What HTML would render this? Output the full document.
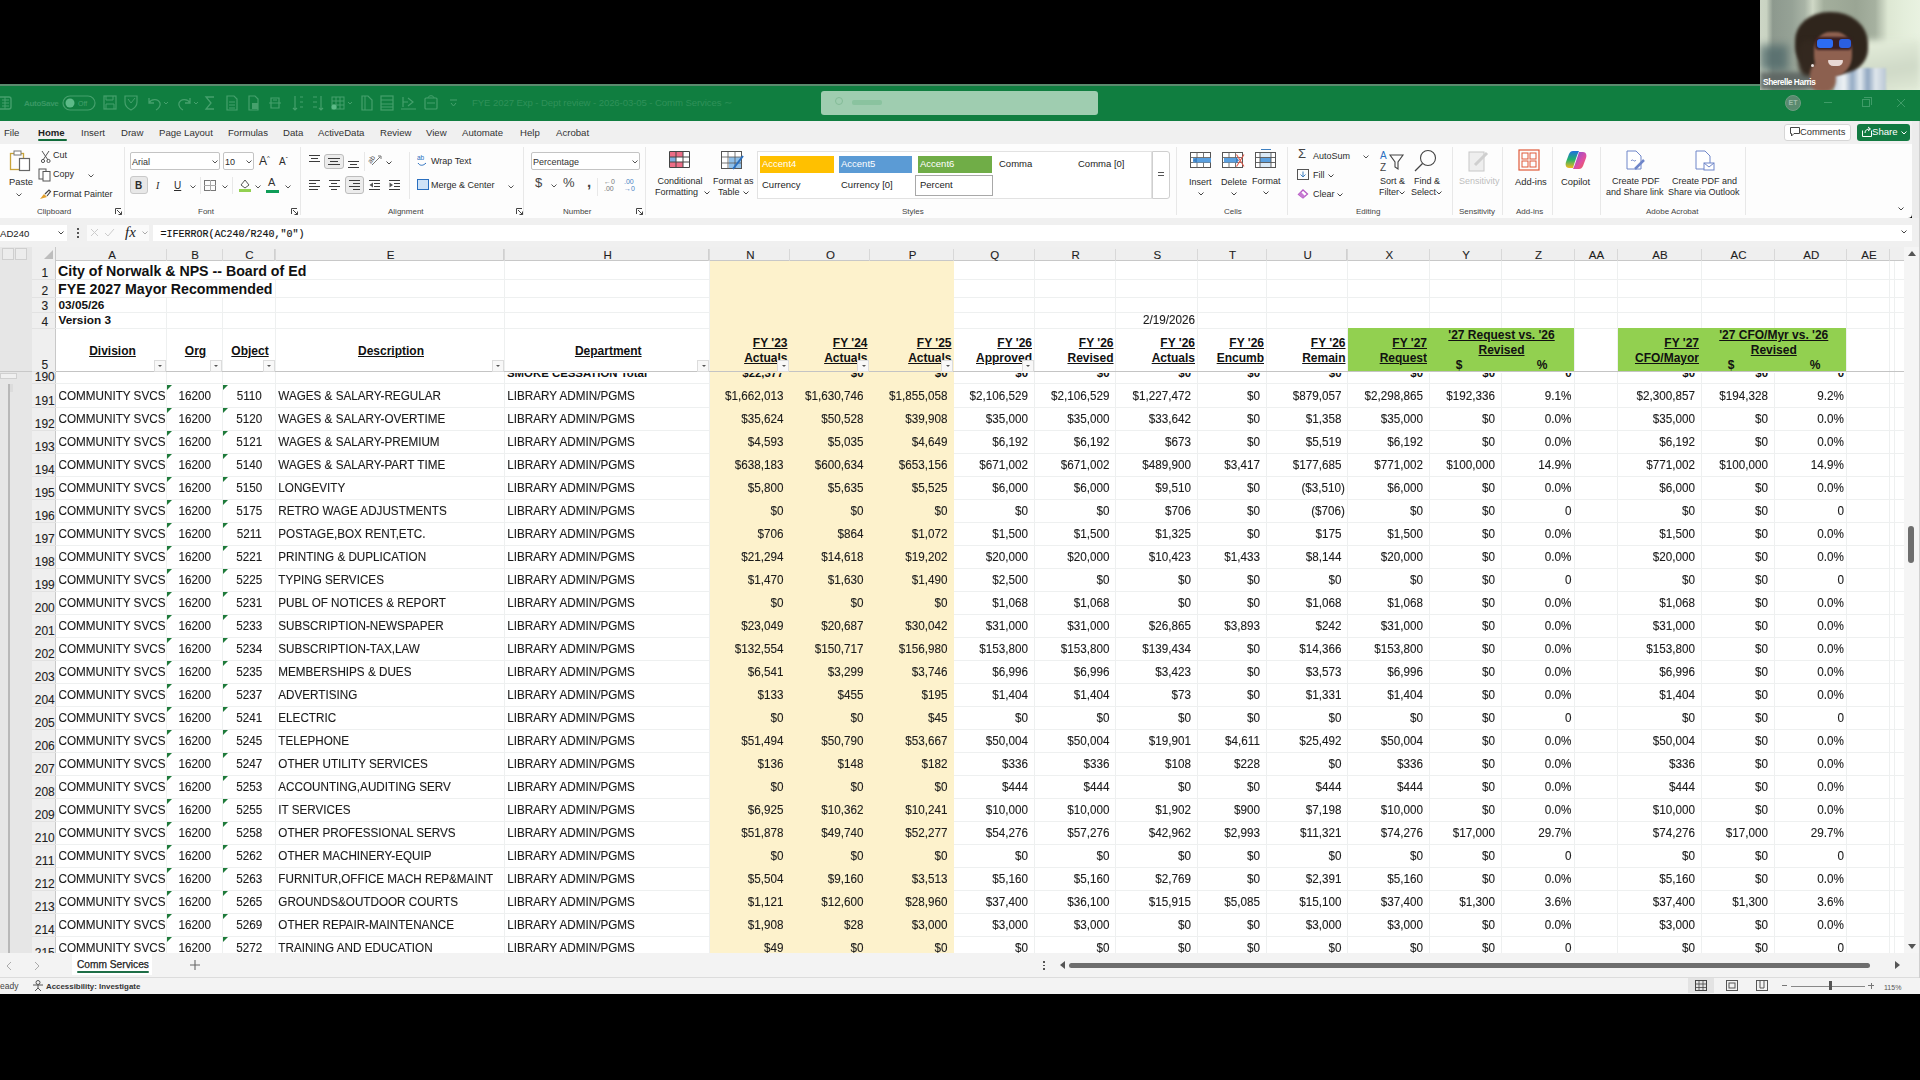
<!DOCTYPE html><html><head><meta charset="utf-8"><style>
*{margin:0;padding:0;box-sizing:border-box}
html,body{width:1920px;height:1080px;overflow:hidden;background:#000;font-family:"Liberation Sans",sans-serif;color:#222}
.cell span,.rowh span,.colh{-webkit-text-stroke:0.1px currentColor}
.abs{position:absolute}
.vl{width:1px;background:#e3e3e3}
.hl{height:1px;background:#e3e3e3}
.colh{font-size:11.5px;color:#1e1e1e;text-align:center;line-height:14px;height:14px}
.rowh{font-size:12px;color:#1e1e1e}
.cell{font-size:11.7px;color:#1a1a1a;line-height:13px;white-space:nowrap}
.cell span{transform:scaleY(1.08);transform-origin:50% 9px}
.title{font-size:14.2px;font-weight:bold;color:#111;line-height:17px;white-space:nowrap}
.sub{font-size:11.8px;font-weight:bold;color:#111;line-height:15px;white-space:nowrap}
.hdr{font-size:12px;font-weight:bold;color:#111;white-space:nowrap}
.hdr u{text-decoration-thickness:1px;text-underline-offset:1px}
.b{font-size:11.4px;font-weight:bold;color:#111;white-space:nowrap;line-height:13px}
.fbtn{width:12px;height:12px;background:#f8f8f8;border:1px solid #dcdcdc}
.fbtn:after{content:"";position:absolute;left:3.5px;top:4.5px;border-left:2px solid transparent;border-right:2px solid transparent;border-top:2px solid #555}

.rt{font-size:9px;color:#2b2b2b;white-space:nowrap;line-height:11px}
.rl{font-size:8px;color:#444;white-space:nowrap;line-height:10px}
.tab{font-size:9.6px;color:#333;white-space:nowrap;line-height:12px}
.sep{width:1px;background:#e8e8e8}
.chev{font-size:7px;color:#555}
</style></head><body><div class="abs" style="z-index:5;left:1760px;top:0;width:160px;height:90px;overflow:hidden;background:linear-gradient(90deg,#cdd6c6 0%,#c9d3c2 4%,#8d998e 8%,#96a296 20%,#a9b4a6 28%,#cfd8c6 33%,#a3ae9c 40%,#9aa594 60%,#a6b1a0 72%,#dde7d3 80%,#e4eedb 90%,#e9f2e1 100%)">
<div class="abs" style="left:0;top:45px;width:28px;height:26px;background:#50696a;filter:blur(4px);opacity:.8"></div>
<div class="abs" style="left:96px;top:40px;width:64px;height:50px;background:linear-gradient(170deg,#e6efdc,#cfd9c7 60%,#dfe8d5);filter:blur(3px)"></div>
<div class="abs" style="left:0;top:72px;width:58px;height:18px;background:#59615f;filter:blur(2px);opacity:.85"></div>
<div class="abs" style="left:74px;top:68px;width:52px;height:30px;background:linear-gradient(90deg,#c9d6e2,#eef2f4 20%,#93aac4 35%,#e4ebf0 50%,#8fa6c0 65%,#dfe6ec 80%,#b9c7d4);filter:blur(1.2px)"></div>
<div class="abs" style="left:35px;top:12px;width:73px;height:62px;border-radius:46% 50% 40% 44%;background:#2f251c;filter:blur(1.8px)"></div>
<div class="abs" style="left:38px;top:40px;width:22px;height:36px;border-radius:40%;background:#33281f;filter:blur(2px)"></div>
<div class="abs" style="left:54px;top:32px;width:38px;height:44px;border-radius:42% 42% 46% 46%;background:#8f6150;filter:blur(1.2px)"></div>
<div class="abs" style="left:50px;top:62px;width:26px;height:30px;border-radius:40%;background:#8c604f;filter:blur(1.5px)"></div>
<div class="abs" style="left:55px;top:37px;width:37px;height:13px;border-radius:4px;background:#3a1f22;filter:blur(.8px)"></div>
<div class="abs" style="left:57px;top:39px;width:16px;height:9px;background:#2c6cf4;border-radius:3px;filter:blur(.7px)"></div>
<div class="abs" style="left:79px;top:39px;width:12px;height:9px;background:#2a5fe0;border-radius:3px;filter:blur(.7px)"></div>
<div class="abs" style="left:68px;top:60px;width:15px;height:6px;background:#e8d8d4;border-radius:1px 1px 8px 8px;filter:blur(.6px)"></div>
<div class="abs" style="left:51px;top:64px;width:3px;height:3px;background:#e8e0dc;border-radius:50%"></div>
<div class="abs" style="left:3px;top:77px;font-size:8.4px;font-weight:bold;color:#fff;letter-spacing:-0.45px">Sherelle Harris</div>
</div>
<div class="abs" style="left:0;top:84px;width:1920px;height:37px;background:#107e40"></div>
<div class="abs" style="left:0;top:84px;width:1760px;height:1.5px;background:#5c8a6e"></div>
<svg class="abs" style="left:0px;top:94px" width="14" height="18"><rect x="-3" y="3" width="14" height="12" rx="2" fill="none" stroke="#45a06c" stroke-width="1.4"/><path d="M2 6H9M2 9H9M2 12H9M5 3V15" stroke="#45a06c"/></svg>
<div class="abs" style="left:24px;top:99px;font-size:8px;color:#3a9864;font-weight:bold;letter-spacing:-.3px">AutoSave</div>
<svg class="abs" style="left:62px;top:94px" width="34" height="18"><rect x="1" y="2" width="32" height="14" rx="7" fill="none" stroke="#45a06c" stroke-width="1.2"/><circle cx="8" cy="9" r="4.5" fill="#5dba88"/><text x="16" y="12" font-size="7" fill="#45a06c" font-family="Liberation Sans">Off</text></svg>
<svg class="abs" style="left:103px;top:94px" width="14" height="18"><rect x="1" y="2" width="12" height="13" fill="none" stroke="#45a06c" stroke-width="1.2"/><path d="M3 2V6H10V2M3 15V10H11V15" stroke="#45a06c" fill="none"/></svg>
<svg class="abs" style="left:124px;top:94px" width="14" height="18"><path d="M1 2H13V8C13 12 9 15 7 16C5 15 1 12 1 8Z" fill="none" stroke="#45a06c" stroke-width="1.2"/><path d="M4 5L7 9L11 4" stroke="#45a06c" fill="none"/></svg>
<svg class="abs" style="left:145px;top:94px" width="24" height="18"><path d="M4 4V9H9M4 9C6 5 13 4 15 9C16 12 13 15 11 16" stroke="#45a06c" stroke-width="1.3" fill="none"/><path d="M19 8L21 10L23 8" stroke="#45a06c" fill="none"/></svg>
<svg class="abs" style="left:176px;top:94px" width="24" height="18"><path d="M14 4V9H9M14 9C12 5 5 4 3 9C2 12 5 15 7 16" stroke="#45a06c" stroke-width="1.3" fill="none"/><path d="M18 8L20 10L22 8" stroke="#45a06c" fill="none"/></svg>
<svg class="abs" style="left:204px;top:94px" width="12" height="18"><path d="M10 3H2L7 9L2 15H10" stroke="#45a06c" stroke-width="1.3" fill="none"/></svg>
<svg class="abs" style="left:225px;top:94px" width="14" height="18"><path d="M2 2H9L12 5V16H2Z" fill="none" stroke="#45a06c" stroke-width="1.2"/><path d="M4 8H10M4 11H10M4 14H10" stroke="#45a06c"/></svg>
<svg class="abs" style="left:248px;top:94px" width="12" height="18"><path d="M1 2H7L10 5V16H1Z" fill="none" stroke="#45a06c" stroke-width="1.2"/><rect x="4" y="9" width="6" height="6" fill="#45a06c"/></svg>
<svg class="abs" style="left:268px;top:94px" width="14" height="18"><path d="M3 4H11V14H3Z" fill="none" stroke="#45a06c" stroke-width="1.2"/><path d="M1 9H13M5 6H9" stroke="#45a06c"/></svg>
<svg class="abs" style="left:291px;top:94px" width="14" height="18"><path d="M4 2V16M2 14L4 16L6 14M9 3H12M9 8H12M9 13H12" stroke="#45a06c" stroke-width="1.2" fill="none"/></svg>
<svg class="abs" style="left:311px;top:94px" width="14" height="18"><path d="M10 2V16M8 14L10 16L12 14M2 3H6M2 8H6M2 13H6" stroke="#45a06c" stroke-width="1.2" fill="none"/></svg>
<svg class="abs" style="left:331px;top:94px" width="22" height="18"><rect x="1" y="3" width="12" height="12" fill="none" stroke="#45a06c"/><path d="M1 7H13M1 11H13M5 3V15M9 3V15" stroke="#45a06c"/><circle cx="3" cy="13" r="2.5" fill="#5dba88"/><path d="M17 8L19 10L21 8" stroke="#45a06c" fill="none"/></svg>
<svg class="abs" style="left:360px;top:94px" width="14" height="18"><path d="M2 2H8L12 6V16H2Z" fill="none" stroke="#45a06c" stroke-width="1.2"/><path d="M5 2V16" stroke="#45a06c"/></svg>
<svg class="abs" style="left:380px;top:94px" width="14" height="18"><rect x="1" y="2" width="12" height="14" fill="none" stroke="#45a06c" stroke-width="1.2"/><path d="M1 6H13M1 10H13M1 13H13" stroke="#45a06c"/></svg>
<svg class="abs" style="left:400px;top:94px" width="17" height="18"><path d="M1 15H16M3 3V13M3 8H8M8 4L13 8L8 12" stroke="#45a06c" stroke-width="1.2" fill="none"/></svg>
<svg class="abs" style="left:424px;top:94px" width="14" height="18"><rect x="1" y="4" width="12" height="11" rx="1" fill="none" stroke="#45a06c" stroke-width="1.2"/><path d="M4 4C4 1 10 1 10 4M3 9H11" stroke="#45a06c" fill="none"/></svg>
<svg class="abs" style="left:449px;top:94px" width="9" height="18"><path d="M1 6H8M2 9L4.5 12L7 9" stroke="#45a06c" fill="none"/></svg>
<div class="abs" style="left:472px;top:97px;font-size:9.6px;color:#2f9159;white-space:nowrap;letter-spacing:-.1px">FYE 2027 Exp - Dept review - 2026-03-05 - Comm Services &#8764;</div>
<div class="abs" style="left:821px;top:91px;width:277px;height:24px;background:#9fcdb0;border-radius:3px"></div>
<div class="abs" style="left:835px;top:97px;width:8px;height:8px;border:1.3px solid #84bc98;border-radius:50%"></div>
<div class="abs" style="left:852px;top:100px;width:30px;height:5px;background:#8ac39f;border-radius:2px"></div>
<div class="abs" style="left:1785px;top:95px;width:16px;height:16px;border-radius:50%;background:#5a8a6f;border:1px solid #6f9c82"></div>
<div class="abs" style="left:1788.5px;top:99px;font-size:7px;color:#9dbcaa;font-weight:bold">ET</div>
<div class="abs" style="left:1824px;top:102px;width:8px;height:1px;background:#3f9c68"></div>
<div class="abs" style="left:1862px;top:99px;width:8px;height:8px;border:1px solid #3f9c68"></div><div class="abs" style="left:1864px;top:97px;width:8px;height:8px;border-top:1px solid #3f9c68;border-right:1px solid #3f9c68"></div>
<svg class="abs" style="left:1896px;top:98px" width="10" height="10"><path d="M1 1L9 9M9 1L1 9" stroke="#3f9c68" stroke-width="1"/></svg>
<div class="abs" style="left:0;top:121px;width:1920px;height:23px;background:#f0f0f0"></div>
<div class="abs tab" style="left:4px;top:127px;">File</div>
<div class="abs tab" style="left:38px;top:127px;font-weight:bold;color:#222">Home</div>
<div class="abs tab" style="left:81px;top:127px;">Insert</div>
<div class="abs tab" style="left:121px;top:127px;">Draw</div>
<div class="abs tab" style="left:159px;top:127px;">Page Layout</div>
<div class="abs tab" style="left:228px;top:127px;">Formulas</div>
<div class="abs tab" style="left:283px;top:127px;">Data</div>
<div class="abs tab" style="left:318px;top:127px;">ActiveData</div>
<div class="abs tab" style="left:380px;top:127px;">Review</div>
<div class="abs tab" style="left:426px;top:127px;">View</div>
<div class="abs tab" style="left:462px;top:127px;">Automate</div>
<div class="abs tab" style="left:520px;top:127px;">Help</div>
<div class="abs tab" style="left:556px;top:127px;">Acrobat</div>
<div class="abs" style="left:38px;top:139px;width:29px;height:2px;background:#0f6b3a;border-radius:1px"></div>
<div class="abs" style="left:1784px;top:123.5px;width:67px;height:17px;background:#fff;border:1px solid #d6d6d6;border-radius:3px"></div>
<svg class="abs" style="left:1790px;top:127px" width="10" height="10"><path d="M0.5 0.5H9.5V6.5H4L1.5 9V6.5H0.5Z" fill="none" stroke="#444" stroke-width="1"/></svg>
<div class="abs tab" style="left:1800px;top:126px;font-size:9.4px">Comments</div>
<div class="abs" style="left:1857px;top:123.5px;width:53px;height:17px;background:#127a42;border-radius:3px"></div>
<svg class="abs" style="left:1862px;top:126px" width="10" height="11"><path d="M0.5 4.5V10.5H9.5V4.5" fill="none" stroke="#fff"/><path d="M3 7C3 4 5 3 8 3M6 1L8.5 3L6 5" fill="none" stroke="#fff"/></svg>
<div class="abs tab" style="left:1872px;top:126px;color:#fff;font-size:9.6px">Share</div>
<svg class="abs" style="left:1901px;top:131px" width="6" height="4"><path d="M0.5 0.5L3 3L5.5 0.5" stroke="#fff" stroke-width="1" fill="none"/></svg>
<div class="abs" style="left:0;top:144px;width:1912px;height:74px;background:#fdfdfd;border-radius:0 0 4px 0"></div>
<div class="abs" style="left:1912px;top:121px;width:8px;height:130px;background:#ececec"></div>
<div class="abs" style="left:0;top:218px;width:1920px;height:29px;background:#f0f0f0"></div>
<div class="abs sep" style="left:124px;top:147px;height:68px"></div>
<div class="abs sep" style="left:300px;top:147px;height:68px"></div>
<div class="abs sep" style="left:523px;top:147px;height:68px"></div>
<div class="abs sep" style="left:645px;top:147px;height:68px"></div>
<div class="abs sep" style="left:1176px;top:147px;height:68px"></div>
<div class="abs sep" style="left:1287px;top:147px;height:68px"></div>
<div class="abs sep" style="left:1452px;top:147px;height:68px"></div>
<div class="abs sep" style="left:1502px;top:147px;height:68px"></div>
<div class="abs sep" style="left:1552px;top:147px;height:68px"></div>
<div class="abs sep" style="left:1600px;top:147px;height:68px"></div>
<div class="abs sep" style="left:1745px;top:147px;height:68px"></div>
<div class="abs sep" style="left:408.5px;top:152px;height:47px"></div>
<div class="abs sep" style="left:597px;top:178px;height:18px"></div>
<div class="abs sep" style="left:200px;top:177px;height:17px"></div>
<div class="abs sep" style="left:232px;top:177px;height:17px"></div>
<svg class="abs" style="left:8px;top:148px" width="26" height="26"><rect x="2.5" y="5.5" width="13" height="16" fill="none" stroke="#c9a43a" stroke-width="1.3"/><rect x="6" y="3" width="7" height="4" fill="#fff" stroke="#777" stroke-width="1"/><rect x="11.5" y="10.5" width="10" height="12" fill="#fff" stroke="#666" stroke-width="1.2"/></svg>
<div class="abs rt" style="left:9px;top:176px;font-size:9.4px">Paste</div>
<svg class="abs" style="left:16px;top:193px" width="6" height="4"><path d="M0.5 0.5L3 3L5.5 0.5" stroke="#555" stroke-width="1" fill="none"/></svg>
<svg class="abs" style="left:40px;top:150px" width="12" height="13"><path d="M2 1L8 10M9 1L3 10" stroke="#555" stroke-width="1"/><circle cx="3" cy="11" r="1.6" fill="none" stroke="#555"/><circle cx="8.5" cy="11" r="1.6" fill="none" stroke="#555"/></svg>
<div class="abs rt" style="left:53px;top:150px;">Cut</div>
<svg class="abs" style="left:38px;top:168px" width="14" height="14"><rect x="1" y="1" width="7" height="10" fill="none" stroke="#555"/><rect x="5" y="3.5" width="7" height="9.5" fill="#fff" stroke="#555"/></svg>
<div class="abs rt" style="left:53px;top:169px;">Copy</div>
<svg class="abs" style="left:88px;top:174px" width="6" height="4"><path d="M0.5 0.5L3 3L5.5 0.5" stroke="#555" stroke-width="1" fill="none"/></svg>
<svg class="abs" style="left:38px;top:188px" width="14" height="13"><path d="M2 11L6 6L9 9Z" fill="#e2a02c"/><path d="M7 6L11 2L12.5 3.5L9 8" fill="none" stroke="#444" stroke-width="1.2"/></svg>
<div class="abs rt" style="left:53px;top:189px;">Format Painter</div>
<div class="abs rl" style="left:37px;top:206.5px;">Clipboard</div>
<svg class="abs" style="left:115px;top:208px" width="7" height="7"><path d="M0.5 6V0.5H6" stroke="#444" fill="none"/><path d="M2 2L6.5 6.5M6.5 3.5V6.5H3.5" stroke="#444" fill="none"/></svg>
<div class="abs" style="left:130px;top:152px;width:90px;height:18px;background:#fff;border:1px solid #c4c4c4;border-radius:2px"></div>
<div class="abs rt" style="left:132px;top:157px;color:#333">Arial</div>
<svg class="abs" style="left:212px;top:160px" width="6" height="4"><path d="M0.5 0.5L3 3L5.5 0.5" stroke="#555" stroke-width="1" fill="none"/></svg>
<div class="abs" style="left:223px;top:152px;width:31px;height:18px;background:#fff;border:1px solid #c4c4c4;border-radius:2px"></div>
<div class="abs rt" style="left:225px;top:157px;">10</div>
<svg class="abs" style="left:246px;top:160px" width="6" height="4"><path d="M0.5 0.5L3 3L5.5 0.5" stroke="#555" stroke-width="1" fill="none"/></svg>
<div class="abs rt" style="left:259px;top:153px;font-size:12px">A<sup style="font-size:6px">^</sup></div>
<div class="abs rt" style="left:279px;top:154px;font-size:10px">A<sup style="font-size:6px">ˇ</sup></div>
<div class="abs" style="left:130px;top:176px;width:18px;height:18px;background:#e8e8e8;border:1px solid #c9c9c9;border-radius:3px"></div>
<div class="abs rt" style="left:135px;top:180px;font-weight:bold;font-size:10px">B</div>
<div class="abs rt" style="left:156px;top:180px;font-style:italic;font-size:10px;font-family:Liberation Serif">I</div>
<div class="abs rt" style="left:174px;top:180px;text-decoration:underline;font-size:10px">U</div>
<svg class="abs" style="left:190px;top:185px" width="6" height="4"><path d="M0.5 0.5L3 3L5.5 0.5" stroke="#555" stroke-width="1" fill="none"/></svg>
<div class="abs" style="left:204px;top:180px;width:12px;height:11px;border:1px solid #777"></div><div class="abs" style="left:210px;top:180px;width:1px;height:11px;background:#aaa"></div><div class="abs" style="left:204px;top:185px;width:12px;height:1px;background:#aaa"></div>
<svg class="abs" style="left:222px;top:185px" width="6" height="4"><path d="M0.5 0.5L3 3L5.5 0.5" stroke="#555" stroke-width="1" fill="none"/></svg>
<svg class="abs" style="left:238px;top:177px" width="14" height="16"><path d="M3 8L7 3L11 8L7 11Z" fill="none" stroke="#555"/><rect x="1" y="12" width="12" height="3" fill="#92d050"/></svg>
<svg class="abs" style="left:255px;top:185px" width="6" height="4"><path d="M0.5 0.5L3 3L5.5 0.5" stroke="#555" stroke-width="1" fill="none"/></svg>
<div class="abs" style="left:268px;top:176px;font-size:11px;color:#333">A</div><div class="abs" style="left:266px;top:190px;width:13px;height:3px;background:#0f9d58"></div>
<svg class="abs" style="left:285px;top:185px" width="6" height="4"><path d="M0.5 0.5L3 3L5.5 0.5" stroke="#555" stroke-width="1" fill="none"/></svg>
<div class="abs rl" style="left:198px;top:206.5px;">Font</div>
<svg class="abs" style="left:291px;top:208px" width="7" height="7"><path d="M0.5 6V0.5H6" stroke="#444" fill="none"/><path d="M2 2L6.5 6.5M6.5 3.5V6.5H3.5" stroke="#444" fill="none"/></svg>
<div class="abs" style="left:309px;top:155px;width:11px;height:1px;background:#3c3c3c"></div><div class="abs" style="left:311px;top:158px;width:7px;height:1px;background:#3c3c3c"></div><div class="abs" style="left:309px;top:161px;width:11px;height:1px;background:#3c3c3c"></div>
<div class="abs" style="left:324px;top:154px;width:20px;height:15px;background:#ececec;border:1px solid #bdbdbd;border-radius:3px"></div><div class="abs" style="left:328px;top:158px;width:12px;height:1px;background:#3c3c3c"></div><div class="abs" style="left:330px;top:161px;width:8px;height:1px;background:#3c3c3c"></div><div class="abs" style="left:328px;top:164px;width:12px;height:1px;background:#3c3c3c"></div>
<div class="abs" style="left:348px;top:161px;width:11px;height:1px;background:#3c3c3c"></div><div class="abs" style="left:350px;top:164px;width:7px;height:1px;background:#3c3c3c"></div><div class="abs" style="left:348px;top:167px;width:11px;height:1px;background:#3c3c3c"></div>
<div class="abs sep" style="left:364px;top:152px;height:19px"></div>
<svg class="abs" style="left:368px;top:152px" width="14" height="14"><text x="0" y="0" font-size="7" fill="#555" font-family="Liberation Sans" transform="translate(3,12) rotate(-55)">ab</text><path d="M4 13L12 5" stroke="#666" stroke-width="0.9"/><path d="M10 4L13 4L13 7" stroke="#666" fill="none" stroke-width="0.9"/></svg>
<svg class="abs" style="left:386px;top:161px" width="6" height="4"><path d="M0.5 0.5L3 3L5.5 0.5" stroke="#444" stroke-width="1" fill="none"/></svg>
<div class="abs" style="left:309px;top:180px;width:11px;height:1px;background:#3c3c3c"></div><div class="abs" style="left:309px;top:183px;width:7px;height:1px;background:#3c3c3c"></div><div class="abs" style="left:309px;top:186px;width:11px;height:1px;background:#3c3c3c"></div><div class="abs" style="left:309px;top:189px;width:9px;height:1px;background:#3c3c3c"></div>
<div class="abs" style="left:329px;top:180px;width:11px;height:1px;background:#3c3c3c"></div><div class="abs" style="left:331px;top:183px;width:6px;height:1px;background:#3c3c3c"></div><div class="abs" style="left:329px;top:186px;width:11px;height:1px;background:#3c3c3c"></div><div class="abs" style="left:331px;top:189px;width:6px;height:1px;background:#3c3c3c"></div>
<div class="abs" style="left:345px;top:176px;width:19px;height:18px;background:#ececec;border:1px solid #bdbdbd;border-radius:3px"></div><div class="abs" style="left:349px;top:180px;width:11px;height:1px;background:#3c3c3c"></div><div class="abs" style="left:353px;top:183px;width:7px;height:1px;background:#3c3c3c"></div><div class="abs" style="left:349px;top:186px;width:11px;height:1px;background:#3c3c3c"></div><div class="abs" style="left:353px;top:189px;width:7px;height:1px;background:#3c3c3c"></div>
<div class="abs" style="left:369px;top:180px;width:11px;height:1px;background:#3c3c3c"></div><div class="abs" style="left:374px;top:183px;width:6px;height:1px;background:#3c3c3c"></div><div class="abs" style="left:374px;top:186px;width:6px;height:1px;background:#3c3c3c"></div><div class="abs" style="left:369px;top:189px;width:11px;height:1px;background:#3c3c3c"></div>
<svg class="abs" style="left:369px;top:182px" width="5" height="6"><path d="M4 0.5L0.5 3L4 5.5" fill="#555"/></svg>
<div class="abs" style="left:389px;top:180px;width:11px;height:1px;background:#3c3c3c"></div><div class="abs" style="left:394px;top:183px;width:6px;height:1px;background:#3c3c3c"></div><div class="abs" style="left:394px;top:186px;width:6px;height:1px;background:#3c3c3c"></div><div class="abs" style="left:389px;top:189px;width:11px;height:1px;background:#3c3c3c"></div>
<svg class="abs" style="left:389px;top:182px" width="5" height="6"><path d="M0.5 0.5L4 3L0.5 5.5" fill="#555"/></svg>
<svg class="abs" style="left:417px;top:154px" width="12" height="13"><text x="0" y="6" font-size="6.5" fill="#2a6fbf">ab</text><path d="M1 9C3 12 6 12 9 9" stroke="#2a6fbf" fill="none"/></svg>
<div class="abs rt" style="left:431px;top:156px;">Wrap Text</div>
<div class="abs" style="left:417px;top:179px;width:12px;height:11px;border:1.2px solid #2a6fbf;background:#cfe3f7"></div>
<div class="abs rt" style="left:431px;top:180px;">Merge &amp; Center</div>
<svg class="abs" style="left:508px;top:185px" width="6" height="4"><path d="M0.5 0.5L3 3L5.5 0.5" stroke="#555" stroke-width="1" fill="none"/></svg>
<div class="abs rl" style="left:388px;top:206.5px;">Alignment</div>
<svg class="abs" style="left:516px;top:208px" width="7" height="7"><path d="M0.5 6V0.5H6" stroke="#444" fill="none"/><path d="M2 2L6.5 6.5M6.5 3.5V6.5H3.5" stroke="#444" fill="none"/></svg>
<div class="abs" style="left:531px;top:152px;width:109px;height:18px;background:#fff;border:1px solid #c4c4c4;border-radius:2px"></div>
<div class="abs rt" style="left:533px;top:157px;color:#333">Percentage</div>
<svg class="abs" style="left:632px;top:160px" width="6" height="4"><path d="M0.5 0.5L3 3L5.5 0.5" stroke="#555" stroke-width="1" fill="none"/></svg>
<div class="abs rt" style="left:535px;top:177px;font-size:13px;color:#444">$</div>
<svg class="abs" style="left:551px;top:184px" width="6" height="4"><path d="M0.5 0.5L3 3L5.5 0.5" stroke="#555" stroke-width="1" fill="none"/></svg>
<div class="abs rt" style="left:563px;top:177px;font-size:13px;color:#444">%</div>
<div class="abs rt" style="left:587px;top:176px;font-size:15px;font-weight:bold;color:#444">,</div>
<div class="abs rt" style="left:604px;top:178px;color:#777;line-height:7px"><span style="font-size:7px;line-height:7px">←0<br>.00</span></div>
<div class="abs rt" style="left:624px;top:178px;color:#4a82c4;line-height:7px"><span style="font-size:7px;line-height:7px">.00<br>→0</span></div>
<div class="abs rl" style="left:563px;top:206.5px;">Number</div>
<svg class="abs" style="left:636px;top:208px" width="7" height="7"><path d="M0.5 6V0.5H6" stroke="#444" fill="none"/><path d="M2 2L6.5 6.5M6.5 3.5V6.5H3.5" stroke="#444" fill="none"/></svg>
<svg class="abs" style="left:669px;top:151px" width="22" height="18"><rect x="0.5" y="0.5" width="20" height="16" fill="#fff"/><rect x="1" y="1" width="13" height="5" fill="#ec6d86"/><rect x="1" y="6" width="6" height="5" fill="#7fb0e0"/><rect x="1" y="11" width="13" height="5.5" fill="#ec6d86"/><path d="M0.5 0.5H20.5V16.5H0.5Z M0.5 6H20.5M0.5 11H20.5M7 0.5V16.5M14 0.5V16.5" stroke="#444" stroke-width="1" fill="none"/></svg>
<div class="abs rt" style="left:657.5px;top:176px;">Conditional</div>
<div class="abs rt" style="left:655px;top:187px;">Formatting</div>
<svg class="abs" style="left:704px;top:191px" width="6" height="4"><path d="M0.5 0.5L3 3L5.5 0.5" stroke="#444" stroke-width="1" fill="none"/></svg>
<svg class="abs" style="left:721px;top:151px" width="24" height="20"><rect x="0.5" y="0.5" width="20" height="17" fill="#fff" stroke="#555"/><rect x="8" y="6" width="12" height="11" fill="#8fc0ea"/><path d="M0 6H21M0 12H21M7 0V18M14 0V18" stroke="#555" stroke-width="0.8"/><path d="M12 18L22 5" stroke="#2a6fbf" stroke-width="2"/></svg>
<div class="abs rt" style="left:713px;top:176px;">Format as</div>
<div class="abs rt" style="left:718px;top:187px;">Table</div>
<svg class="abs" style="left:743px;top:191px" width="6" height="4"><path d="M0.5 0.5L3 3L5.5 0.5" stroke="#444" stroke-width="1" fill="none"/></svg>
<div class="abs" style="left:757px;top:151px;width:395px;height:48px;background:#fff;border:1px solid #e2e2e2"></div>
<div class="abs" style="left:760px;top:156px;width:74px;height:17px;background:#ffc000"></div>
<div class="abs rt" style="left:762px;top:158px;color:#fff;font-size:9.5px">Accent4</div>
<div class="abs" style="left:839px;top:156px;width:73px;height:17px;background:#5b9bd5"></div>
<div class="abs rt" style="left:841px;top:158px;color:#fff;font-size:9.5px">Accent5</div>
<div class="abs" style="left:918px;top:156px;width:74px;height:17px;background:#70ad47"></div>
<div class="abs rt" style="left:920px;top:158px;color:#fff;font-size:9.5px">Accent6</div>
<div class="abs rt" style="left:999px;top:158px;font-size:9.5px;color:#222">Comma</div>
<div class="abs rt" style="left:1078px;top:158px;font-size:9.5px;color:#222">Comma [0]</div>
<div class="abs rt" style="left:762px;top:179px;font-size:9.5px;color:#222">Currency</div>
<div class="abs rt" style="left:841px;top:179px;font-size:9.5px;color:#222">Currency [0]</div>
<div class="abs" style="left:915px;top:175px;width:78px;height:21px;border:1px solid #a8a8a8;background:#fff"></div>
<div class="abs rt" style="left:920px;top:179px;font-size:9.5px;color:#222">Percent</div>
<div class="abs" style="left:1152px;top:151px;width:18px;height:48px;background:#fff;border:1px solid #cfcfcf;border-radius:0 3px 3px 0"></div>
<div class="abs" style="left:1158px;top:172px;width:6px;height:1px;background:#555"></div><div class="abs" style="left:1158px;top:175px;width:6px;height:1px;background:#555"></div>
<div class="abs rl" style="left:902px;top:206.5px;">Styles</div>
<svg class="abs" style="left:1189px;top:150px" width="24" height="20"><rect x="1.5" y="2.5" width="20" height="15" fill="#fff" stroke="#555"/><path d="M1.5 7.5H21.5M1.5 12.5H21.5M8 2.5V17.5M14.5 2.5V17.5" stroke="#666" stroke-width="0.9"/><rect x="4" y="8" width="18" height="4.5" fill="#5aa0e0"/><path d="M4 10.2L8 7.5V13Z" fill="#3d7fc0"/></svg>
<div class="abs rt" style="left:1189px;top:176.5px;">Insert</div>
<svg class="abs" style="left:1198px;top:192px" width="6" height="4"><path d="M0.5 0.5L3 3L5.5 0.5" stroke="#444" stroke-width="1" fill="none"/></svg>
<svg class="abs" style="left:1221px;top:150px" width="26" height="20"><rect x="1.5" y="2.5" width="20" height="15" fill="#fff" stroke="#555"/><path d="M1.5 7.5H21.5M1.5 12.5H21.5M8 2.5V17.5M14.5 2.5V17.5" stroke="#666" stroke-width="0.9"/><rect x="3" y="8" width="12" height="4.5" fill="#5aa0e0"/><path d="M15 7L18 10.2L15 13.5Z" fill="#3d7fc0"/><path d="M15.5 4.5L23 16.5M23 4.5L15.5 16.5" stroke="#e0594a" stroke-width="1.1"/></svg>
<div class="abs rt" style="left:1221px;top:176.5px;">Delete</div>
<svg class="abs" style="left:1231px;top:192px" width="6" height="4"><path d="M0.5 0.5L3 3L5.5 0.5" stroke="#444" stroke-width="1" fill="none"/></svg>
<svg class="abs" style="left:1254px;top:148px" width="24" height="22"><path d="M7 1.5H17" stroke="#3d7fc0" stroke-width="1"/><rect x="1.5" y="4.5" width="20" height="15" fill="#fff" stroke="#555"/><rect x="6" y="5" width="11" height="14" fill="#dbeaf7"/><rect x="6" y="10" width="11" height="4.5" fill="#5aa0e0"/><path d="M1.5 9.5H21.5M1.5 14.5H21.5M6 4.5V19.5M17 4.5V19.5" stroke="#555" stroke-width="0.9"/></svg>
<div class="abs rt" style="left:1252px;top:176px;">Format</div>
<svg class="abs" style="left:1263px;top:191px" width="6" height="4"><path d="M0.5 0.5L3 3L5.5 0.5" stroke="#444" stroke-width="1" fill="none"/></svg>
<div class="abs rl" style="left:1224px;top:206.5px;">Cells</div>
<div class="abs rt" style="left:1298px;top:148px;font-size:13px;color:#444">Σ</div>
<div class="abs rt" style="left:1313px;top:151px;">AutoSum</div>
<svg class="abs" style="left:1363px;top:155px" width="6" height="4"><path d="M0.5 0.5L3 3L5.5 0.5" stroke="#555" stroke-width="1" fill="none"/></svg>
<svg class="abs" style="left:1297px;top:168px" width="13" height="13"><rect x="0.5" y="1.5" width="11" height="10" fill="none" stroke="#555"/><path d="M6 3.5V9M3.5 6.5L6 9L8.5 6.5" stroke="#3d7fc0" fill="none"/></svg>
<div class="abs rt" style="left:1313px;top:170px;">Fill</div>
<svg class="abs" style="left:1328px;top:174px" width="6" height="4"><path d="M0.5 0.5L3 3L5.5 0.5" stroke="#444" stroke-width="1" fill="none"/></svg>
<svg class="abs" style="left:1297px;top:188px" width="12" height="11"><path d="M1.5 6.5L6 2L10.5 6L6 10Z" fill="#fff" stroke="#b65bc4" stroke-width="1.3"/><path d="M1.5 6.5L4 4L8 8L6 10Z" fill="#c77bd3"/></svg>
<div class="abs rt" style="left:1313px;top:189px;">Clear</div>
<svg class="abs" style="left:1337px;top:193px" width="6" height="4"><path d="M0.5 0.5L3 3L5.5 0.5" stroke="#444" stroke-width="1" fill="none"/></svg>
<svg class="abs" style="left:1379px;top:149px" width="26" height="24"><text x="1" y="10" font-size="10" fill="#2a6fbf" font-family="Liberation Sans">A</text><text x="1" y="22" font-size="10" fill="#444" font-family="Liberation Sans">Z</text><path d="M11 6H24L19 13V20L16 18V13Z" fill="none" stroke="#444" stroke-width="1.1"/></svg>
<div class="abs rt" style="left:1380px;top:176px;">Sort &amp;</div>
<div class="abs rt" style="left:1379px;top:187px;">Filter</div>
<svg class="abs" style="left:1399px;top:191px" width="6" height="4"><path d="M0.5 0.5L3 3L5.5 0.5" stroke="#444" stroke-width="1" fill="none"/></svg>
<svg class="abs" style="left:1413px;top:149px" width="24" height="24"><circle cx="15" cy="9" r="7.5" fill="none" stroke="#444" stroke-width="1.1"/><path d="M9.5 14.5L2 22" stroke="#444" stroke-width="1.2"/></svg>
<div class="abs rt" style="left:1414px;top:176px;">Find &amp;</div>
<div class="abs rt" style="left:1411px;top:187px;">Select</div>
<svg class="abs" style="left:1436px;top:191px" width="6" height="4"><path d="M0.5 0.5L3 3L5.5 0.5" stroke="#444" stroke-width="1" fill="none"/></svg>
<div class="abs rl" style="left:1356px;top:206.5px;">Editing</div>
<svg class="abs" style="left:1467px;top:149px" width="24" height="24"><rect x="2" y="3" width="15" height="19" fill="#eee" stroke="#c8c8c8"/><path d="M8 16L20 4" stroke="#cfcfcf" stroke-width="3"/></svg>
<div class="abs rt" style="left:1459px;top:176px;color:#bdbdbd">Sensitivity</div>
<div class="abs rl" style="left:1459px;top:206.5px;">Sensitivity</div>
<svg class="abs" style="left:1518px;top:149px" width="24" height="24"><rect x="1" y="1" width="20" height="20" fill="none" stroke="#e05a3a" stroke-width="1.2"/><rect x="4" y="4" width="6" height="6" fill="none" stroke="#e05a3a"/><rect x="12" y="4" width="6" height="6" fill="none" stroke="#e05a3a"/><rect x="4" y="12" width="6" height="6" fill="none" stroke="#e05a3a"/><rect x="12" y="12" width="6" height="6" fill="none" stroke="#e05a3a"/></svg>
<div class="abs rt" style="left:1515px;top:176px;font-size:9.4px">Add-ins</div>
<div class="abs rl" style="left:1516px;top:206.5px;">Add-ins</div>
<svg class="abs" style="left:1564px;top:149px" width="24" height="22"><defs><linearGradient id="cpa" x1="0" y1="0" x2="0" y2="1"><stop offset="0" stop-color="#1f6fe0"/><stop offset=".5" stop-color="#23b26b"/><stop offset="1" stop-color="#f3b81c"/></linearGradient><linearGradient id="cpb" x1="0" y1="0" x2="1" y2="1"><stop offset="0" stop-color="#7b4ee0"/><stop offset=".6" stop-color="#e04fa0"/><stop offset="1" stop-color="#f2613a"/></linearGradient></defs><path d="M9 2H15C13 6 11 12 9 19H5C2 19 1 16 2 13L5 5C6 3 7 2 9 2Z" fill="url(#cpa)"/><path d="M15 3H19C22 3 23 6 22 9L19 17C18 19 17 20 15 20H9C11 16 13 9 15 3Z" fill="url(#cpb)"/></svg>
<div class="abs rt" style="left:1561px;top:176px;font-size:9.4px">Copilot</div>
<svg class="abs" style="left:1625px;top:150px" width="22" height="22"><path d="M2 1H11L16 6V19H2Z" fill="#fff" stroke="#6f86c9"/><path d="M6 11C8 8 9 13 11 10" stroke="#6f86c9" fill="none"/><path d="M10 19L19 10" stroke="#6f86c9" stroke-width="2.5"/></svg>
<div class="abs rt" style="left:1612px;top:176px;">Create PDF</div>
<div class="abs rt" style="left:1606px;top:187px;">and Share link</div>
<svg class="abs" style="left:1694px;top:150px" width="22" height="22"><path d="M2 1H11L16 6V19H2Z" fill="#fff" stroke="#6f86c9"/><rect x="10" y="13" width="10" height="7" fill="#fff" stroke="#6f86c9"/><path d="M10 13L15 17L20 13" stroke="#6f86c9" fill="none"/></svg>
<div class="abs rt" style="left:1672px;top:176px;">Create PDF and</div>
<div class="abs rt" style="left:1668px;top:187px;">Share via Outlook</div>
<div class="abs rl" style="left:1646px;top:206.5px;">Adobe Acrobat</div>
<svg class="abs" style="left:1898px;top:207px" width="6" height="4"><path d="M0.5 0.5L3 3L5.5 0.5" stroke="#444" stroke-width="1" fill="none"/></svg>
<div class="abs" style="left:0;top:224.5px;width:67px;height:16.5px;background:#fff"></div>
<div class="abs rt" style="left:0px;top:228px;font-size:9.6px;color:#222">AD240</div>
<svg class="abs" style="left:58px;top:231px" width="6" height="4"><path d="M0.5 0.5L3 3L5.5 0.5" stroke="#444" stroke-width="1" fill="none"/></svg>
<div class="abs" style="left:77px;top:228px;width:1.5px;height:1.5px;background:#555"></div><div class="abs" style="left:77px;top:232px;width:1.5px;height:1.5px;background:#555"></div><div class="abs" style="left:77px;top:236px;width:1.5px;height:1.5px;background:#555"></div>
<div class="abs" style="left:87px;top:224.5px;width:62px;height:16.5px;background:#fafafa"></div>
<svg class="abs" style="left:89px;top:227px" width="60" height="12"><path d="M2 2L9 9M9 2L2 9" stroke="#ccc"/><path d="M16 6L19 9L25 2" stroke="#ccc" fill="none"/></svg>
<div class="abs rt" style="left:125px;top:225px;font-family:Liberation Serif;font-size:15px;line-height:15px;color:#222"><i>fx</i></div>
<svg class="abs" style="left:142px;top:231px" width="6" height="4"><path d="M0.5 0.5L3 3L5.5 0.5" stroke="#aaa" stroke-width="1" fill="none"/></svg>
<div class="abs" style="left:153px;top:224.5px;width:1759px;height:16.5px;background:#fff"></div>
<div class="abs rt" style="left:160.5px;top:229px;font-family:Liberation Mono;font-size:10px;color:#111;-webkit-text-stroke:0.15px #111">=IFERROR(AC240/R240,"0")</div>
<svg class="abs" style="left:1901px;top:230px" width="6" height="4"><path d="M0.5 0.5L3 3L5.5 0.5" stroke="#444" stroke-width="1" fill="none"/></svg>
<div class="abs" style="left:0;top:241px;width:1920px;height:712px;background:#f0f0f0"></div>
<div class="abs" style="left:56px;top:261px;width:1848px;height:692px;background:#fff"></div>
<div class="abs" style="left:709.5px;top:261px;width:244.0px;height:691.5px;background:#fdf2cc"></div>
<div class="abs" style="left:1347.5px;top:328.3px;width:226.5px;height:43.4px;background:#92d050"></div>
<div class="abs" style="left:1617px;top:328.3px;width:229.5px;height:43.4px;background:#92d050"></div>
<div class="abs" style="left:165.5px;top:297.2px;width:1px;height:661.8px;background:#eef0f0"></div>
<div class="abs" style="left:221.5px;top:297.2px;width:1px;height:661.8px;background:#eef0f0"></div>
<div class="abs" style="left:274.5px;top:279.4px;width:1px;height:679.6px;background:#eef0f0"></div>
<div class="abs" style="left:503.5px;top:261px;width:1px;height:698px;background:#eef0f0"></div>
<div class="abs" style="left:709.0px;top:261px;width:1px;height:698px;background:#eef0f0"></div>
<div class="abs" style="left:1033.5px;top:261px;width:1px;height:698px;background:#eef0f0"></div>
<div class="abs" style="left:1115.0px;top:261px;width:1px;height:698px;background:#eef0f0"></div>
<div class="abs" style="left:1196.5px;top:261px;width:1px;height:698px;background:#eef0f0"></div>
<div class="abs" style="left:1265.5px;top:261px;width:1px;height:698px;background:#eef0f0"></div>
<div class="abs" style="left:1347.0px;top:261px;width:1px;height:698px;background:#eef0f0"></div>
<div class="abs" style="left:1428.5px;top:261px;width:1px;height:67.30000000000001px;background:#eef0f0"></div>
<div class="abs" style="left:1428.5px;top:372.5px;width:1px;height:586.5px;background:#eef0f0"></div>
<div class="abs" style="left:1500.5px;top:261px;width:1px;height:67.30000000000001px;background:#eef0f0"></div>
<div class="abs" style="left:1500.5px;top:372.5px;width:1px;height:586.5px;background:#eef0f0"></div>
<div class="abs" style="left:1573.5px;top:261px;width:1px;height:698px;background:#eef0f0"></div>
<div class="abs" style="left:1616.5px;top:261px;width:1px;height:698px;background:#eef0f0"></div>
<div class="abs" style="left:1700.5px;top:261px;width:1px;height:67.30000000000001px;background:#eef0f0"></div>
<div class="abs" style="left:1700.5px;top:372.5px;width:1px;height:586.5px;background:#eef0f0"></div>
<div class="abs" style="left:1773.5px;top:261px;width:1px;height:67.30000000000001px;background:#eef0f0"></div>
<div class="abs" style="left:1773.5px;top:372.5px;width:1px;height:586.5px;background:#eef0f0"></div>
<div class="abs" style="left:1846.0px;top:261px;width:1px;height:698px;background:#eef0f0"></div>
<div class="abs" style="left:1889.0px;top:261px;width:1px;height:698px;background:#eef0f0"></div>
<div class="abs" style="left:1894px;top:261px;width:1px;height:692px;background:#eef0f0"></div>
<div class="abs" style="left:56px;top:278.9px;width:653.5px;height:1px;background:#eef0f0"></div>
<div class="abs" style="left:953.5px;top:278.9px;width:950.5px;height:1px;background:#eef0f0"></div>
<div class="abs" style="left:56px;top:296.7px;width:653.5px;height:1px;background:#eef0f0"></div>
<div class="abs" style="left:953.5px;top:296.7px;width:950.5px;height:1px;background:#eef0f0"></div>
<div class="abs" style="left:56px;top:312.0px;width:653.5px;height:1px;background:#eef0f0"></div>
<div class="abs" style="left:953.5px;top:312.0px;width:950.5px;height:1px;background:#eef0f0"></div>
<div class="abs" style="left:56px;top:327.8px;width:653.5px;height:1px;background:#eef0f0"></div>
<div class="abs" style="left:953.5px;top:327.8px;width:394.0px;height:1px;background:#eef0f0"></div>
<div class="abs" style="left:1574px;top:327.8px;width:43px;height:1px;background:#eef0f0"></div>
<div class="abs" style="left:1846.5px;top:327.8px;width:57.5px;height:1px;background:#eef0f0"></div>
<div class="abs" style="left:56px;top:383.0px;width:653.5px;height:1px;background:#eef0f0"></div>
<div class="abs" style="left:953.5px;top:383.0px;width:950.5px;height:1px;background:#eef0f0"></div>
<div class="abs" style="left:56px;top:406.5px;width:653.5px;height:1px;background:#eef0f0"></div>
<div class="abs" style="left:953.5px;top:406.5px;width:950.5px;height:1px;background:#eef0f0"></div>
<div class="abs" style="left:56px;top:429.5px;width:653.5px;height:1px;background:#eef0f0"></div>
<div class="abs" style="left:953.5px;top:429.5px;width:950.5px;height:1px;background:#eef0f0"></div>
<div class="abs" style="left:56px;top:452.5px;width:653.5px;height:1px;background:#eef0f0"></div>
<div class="abs" style="left:953.5px;top:452.5px;width:950.5px;height:1px;background:#eef0f0"></div>
<div class="abs" style="left:56px;top:475.5px;width:653.5px;height:1px;background:#eef0f0"></div>
<div class="abs" style="left:953.5px;top:475.5px;width:950.5px;height:1px;background:#eef0f0"></div>
<div class="abs" style="left:56px;top:498.5px;width:653.5px;height:1px;background:#eef0f0"></div>
<div class="abs" style="left:953.5px;top:498.5px;width:950.5px;height:1px;background:#eef0f0"></div>
<div class="abs" style="left:56px;top:521.5px;width:653.5px;height:1px;background:#eef0f0"></div>
<div class="abs" style="left:953.5px;top:521.5px;width:950.5px;height:1px;background:#eef0f0"></div>
<div class="abs" style="left:56px;top:544.5px;width:653.5px;height:1px;background:#eef0f0"></div>
<div class="abs" style="left:953.5px;top:544.5px;width:950.5px;height:1px;background:#eef0f0"></div>
<div class="abs" style="left:56px;top:567.5px;width:653.5px;height:1px;background:#eef0f0"></div>
<div class="abs" style="left:953.5px;top:567.5px;width:950.5px;height:1px;background:#eef0f0"></div>
<div class="abs" style="left:56px;top:590.5px;width:653.5px;height:1px;background:#eef0f0"></div>
<div class="abs" style="left:953.5px;top:590.5px;width:950.5px;height:1px;background:#eef0f0"></div>
<div class="abs" style="left:56px;top:613.5px;width:653.5px;height:1px;background:#eef0f0"></div>
<div class="abs" style="left:953.5px;top:613.5px;width:950.5px;height:1px;background:#eef0f0"></div>
<div class="abs" style="left:56px;top:636.5px;width:653.5px;height:1px;background:#eef0f0"></div>
<div class="abs" style="left:953.5px;top:636.5px;width:950.5px;height:1px;background:#eef0f0"></div>
<div class="abs" style="left:56px;top:659.5px;width:653.5px;height:1px;background:#eef0f0"></div>
<div class="abs" style="left:953.5px;top:659.5px;width:950.5px;height:1px;background:#eef0f0"></div>
<div class="abs" style="left:56px;top:682.5px;width:653.5px;height:1px;background:#eef0f0"></div>
<div class="abs" style="left:953.5px;top:682.5px;width:950.5px;height:1px;background:#eef0f0"></div>
<div class="abs" style="left:56px;top:705.5px;width:653.5px;height:1px;background:#eef0f0"></div>
<div class="abs" style="left:953.5px;top:705.5px;width:950.5px;height:1px;background:#eef0f0"></div>
<div class="abs" style="left:56px;top:728.5px;width:653.5px;height:1px;background:#eef0f0"></div>
<div class="abs" style="left:953.5px;top:728.5px;width:950.5px;height:1px;background:#eef0f0"></div>
<div class="abs" style="left:56px;top:751.5px;width:653.5px;height:1px;background:#eef0f0"></div>
<div class="abs" style="left:953.5px;top:751.5px;width:950.5px;height:1px;background:#eef0f0"></div>
<div class="abs" style="left:56px;top:774.5px;width:653.5px;height:1px;background:#eef0f0"></div>
<div class="abs" style="left:953.5px;top:774.5px;width:950.5px;height:1px;background:#eef0f0"></div>
<div class="abs" style="left:56px;top:797.5px;width:653.5px;height:1px;background:#eef0f0"></div>
<div class="abs" style="left:953.5px;top:797.5px;width:950.5px;height:1px;background:#eef0f0"></div>
<div class="abs" style="left:56px;top:820.5px;width:653.5px;height:1px;background:#eef0f0"></div>
<div class="abs" style="left:953.5px;top:820.5px;width:950.5px;height:1px;background:#eef0f0"></div>
<div class="abs" style="left:56px;top:843.5px;width:653.5px;height:1px;background:#eef0f0"></div>
<div class="abs" style="left:953.5px;top:843.5px;width:950.5px;height:1px;background:#eef0f0"></div>
<div class="abs" style="left:56px;top:866.5px;width:653.5px;height:1px;background:#eef0f0"></div>
<div class="abs" style="left:953.5px;top:866.5px;width:950.5px;height:1px;background:#eef0f0"></div>
<div class="abs" style="left:56px;top:889.5px;width:653.5px;height:1px;background:#eef0f0"></div>
<div class="abs" style="left:953.5px;top:889.5px;width:950.5px;height:1px;background:#eef0f0"></div>
<div class="abs" style="left:56px;top:912.5px;width:653.5px;height:1px;background:#eef0f0"></div>
<div class="abs" style="left:953.5px;top:912.5px;width:950.5px;height:1px;background:#eef0f0"></div>
<div class="abs" style="left:56px;top:935.5px;width:653.5px;height:1px;background:#eef0f0"></div>
<div class="abs" style="left:953.5px;top:935.5px;width:950.5px;height:1px;background:#eef0f0"></div>
<div class="abs" style="left:56px;top:958.5px;width:653.5px;height:1px;background:#eef0f0"></div>
<div class="abs" style="left:953.5px;top:958.5px;width:950.5px;height:1px;background:#eef0f0"></div>
<div class="abs" style="left:32px;top:371.2px;width:1872px;height:1.3px;background:#c4c4c4"></div>
<div class="abs" style="left:32px;top:247px;width:1872px;height:14px;background:#efefef;border-bottom:1px solid #c8c8c8"></div>
<div class="abs colh" style="left:57px;top:247.5px;width:110px">A</div>
<div class="abs" style="left:165.5px;top:249px;width:1px;height:12px;background:#d8d8d8"></div>
<div class="abs colh" style="left:167px;top:247.5px;width:56px">B</div>
<div class="abs" style="left:221.5px;top:249px;width:1px;height:12px;background:#d8d8d8"></div>
<div class="abs colh" style="left:223px;top:247.5px;width:53px">C</div>
<div class="abs" style="left:274.5px;top:249px;width:1px;height:12px;background:#d8d8d8"></div>
<div class="abs colh" style="left:276px;top:247.5px;width:229px">E</div>
<div class="abs" style="left:503.5px;top:249px;width:1px;height:12px;background:#d8d8d8"></div>
<div class="abs colh" style="left:505px;top:247.5px;width:205.5px">H</div>
<div class="abs" style="left:709.0px;top:249px;width:1px;height:12px;background:#d8d8d8"></div>
<div class="abs colh" style="left:710.5px;top:247.5px;width:80.0px">N</div>
<div class="abs" style="left:789.0px;top:249px;width:1px;height:12px;background:#d8d8d8"></div>
<div class="abs colh" style="left:790.5px;top:247.5px;width:80.0px">O</div>
<div class="abs" style="left:869.0px;top:249px;width:1px;height:12px;background:#d8d8d8"></div>
<div class="abs colh" style="left:870.5px;top:247.5px;width:84.0px">P</div>
<div class="abs" style="left:953.0px;top:249px;width:1px;height:12px;background:#d8d8d8"></div>
<div class="abs colh" style="left:954.5px;top:247.5px;width:80.5px">Q</div>
<div class="abs" style="left:1033.5px;top:249px;width:1px;height:12px;background:#d8d8d8"></div>
<div class="abs colh" style="left:1035px;top:247.5px;width:81.5px">R</div>
<div class="abs" style="left:1115.0px;top:249px;width:1px;height:12px;background:#d8d8d8"></div>
<div class="abs colh" style="left:1116.5px;top:247.5px;width:81.5px">S</div>
<div class="abs" style="left:1196.5px;top:249px;width:1px;height:12px;background:#d8d8d8"></div>
<div class="abs colh" style="left:1198px;top:247.5px;width:69px">T</div>
<div class="abs" style="left:1265.5px;top:249px;width:1px;height:12px;background:#d8d8d8"></div>
<div class="abs colh" style="left:1267px;top:247.5px;width:81.5px">U</div>
<div class="abs" style="left:1347.0px;top:249px;width:1px;height:12px;background:#d8d8d8"></div>
<div class="abs colh" style="left:1348.5px;top:247.5px;width:81.5px">X</div>
<div class="abs" style="left:1428.5px;top:249px;width:1px;height:12px;background:#d8d8d8"></div>
<div class="abs colh" style="left:1430px;top:247.5px;width:72px">Y</div>
<div class="abs" style="left:1500.5px;top:249px;width:1px;height:12px;background:#d8d8d8"></div>
<div class="abs colh" style="left:1502px;top:247.5px;width:73px">Z</div>
<div class="abs" style="left:1573.5px;top:249px;width:1px;height:12px;background:#d8d8d8"></div>
<div class="abs colh" style="left:1575px;top:247.5px;width:43px">AA</div>
<div class="abs" style="left:1616.5px;top:249px;width:1px;height:12px;background:#d8d8d8"></div>
<div class="abs colh" style="left:1618px;top:247.5px;width:84px">AB</div>
<div class="abs" style="left:1700.5px;top:249px;width:1px;height:12px;background:#d8d8d8"></div>
<div class="abs colh" style="left:1702px;top:247.5px;width:73px">AC</div>
<div class="abs" style="left:1773.5px;top:249px;width:1px;height:12px;background:#d8d8d8"></div>
<div class="abs colh" style="left:1775px;top:247.5px;width:72.5px">AD</div>
<div class="abs" style="left:1846.0px;top:249px;width:1px;height:12px;background:#d8d8d8"></div>
<div class="abs colh" style="left:1847.5px;top:247.5px;width:43.0px">AE</div>
<div class="abs" style="left:1889.0px;top:249px;width:1px;height:12px;background:#d8d8d8"></div>
<div class="abs" style="left:273.5px;top:249px;width:1px;height:12px;background:#d0d0d0"></div>
<div class="abs" style="left:502.5px;top:249px;width:1px;height:12px;background:#d0d0d0"></div>
<div class="abs" style="left:708.0px;top:249px;width:1px;height:12px;background:#d0d0d0"></div>
<div class="abs" style="left:1346.0px;top:249px;width:1px;height:12px;background:#d0d0d0"></div>
<div class="abs" style="left:32px;top:247px;width:24px;height:14px;background:#efefef;border-right:1px solid #c8c8c8"><svg width="24" height="14" style="position:absolute;left:0;top:0"><path d="M21 3 L21 12 L12 12 Z" fill="#bdbdbd"/></svg></div>
<div class="abs" style="left:32px;top:261px;width:24px;height:692px;background:#efefef;border-right:1px solid #c8c8c8"></div>
<div class="abs rowh" style="left:32px;top:261px;width:24px;height:18.399999999999977px"><span style="position:absolute;left:1.5px;right:0;bottom:-0.5px;text-align:center">1</span></div>
<div class="abs" style="left:32px;top:278.9px;width:24px;height:1px;background:#e2e2e2"></div>
<div class="abs rowh" style="left:32px;top:279.4px;width:24px;height:17.80000000000001px"><span style="position:absolute;left:1.5px;right:0;bottom:-0.5px;text-align:center">2</span></div>
<div class="abs" style="left:32px;top:296.7px;width:24px;height:1px;background:#e2e2e2"></div>
<div class="abs rowh" style="left:32px;top:297.2px;width:24px;height:15.300000000000011px"><span style="position:absolute;left:1.5px;right:0;bottom:-0.5px;text-align:center">3</span></div>
<div class="abs" style="left:32px;top:312.0px;width:24px;height:1px;background:#e2e2e2"></div>
<div class="abs rowh" style="left:32px;top:312.5px;width:24px;height:15.800000000000011px"><span style="position:absolute;left:1.5px;right:0;bottom:-0.5px;text-align:center">4</span></div>
<div class="abs" style="left:32px;top:327.8px;width:24px;height:1px;background:#e2e2e2"></div>
<div class="abs rowh" style="left:32px;top:328.3px;width:24px;height:43.39999999999998px"><span style="position:absolute;left:1.5px;right:0;bottom:-0.5px;text-align:center">5</span></div>
<div class="abs" style="left:32px;top:371.2px;width:24px;height:1px;background:#e2e2e2"></div>
<div class="abs rowh" style="left:32px;top:372.5px;width:24px;height:11.0px"><span style="position:absolute;left:1.5px;right:0;bottom:-0.5px;text-align:center">190</span></div>
<div class="abs" style="left:32px;top:383.0px;width:24px;height:1px;background:#e2e2e2"></div>
<div class="abs rowh" style="left:32px;top:384px;width:24px;height:23px"><span style="position:absolute;left:1.5px;right:0;bottom:-0.5px;text-align:center">191</span></div>
<div class="abs" style="left:32px;top:406.5px;width:24px;height:1px;background:#e2e2e2"></div>
<div class="abs rowh" style="left:32px;top:407px;width:24px;height:23px"><span style="position:absolute;left:1.5px;right:0;bottom:-0.5px;text-align:center">192</span></div>
<div class="abs" style="left:32px;top:429.5px;width:24px;height:1px;background:#e2e2e2"></div>
<div class="abs rowh" style="left:32px;top:430px;width:24px;height:23px"><span style="position:absolute;left:1.5px;right:0;bottom:-0.5px;text-align:center">193</span></div>
<div class="abs" style="left:32px;top:452.5px;width:24px;height:1px;background:#e2e2e2"></div>
<div class="abs rowh" style="left:32px;top:453px;width:24px;height:23px"><span style="position:absolute;left:1.5px;right:0;bottom:-0.5px;text-align:center">194</span></div>
<div class="abs" style="left:32px;top:475.5px;width:24px;height:1px;background:#e2e2e2"></div>
<div class="abs rowh" style="left:32px;top:476px;width:24px;height:23px"><span style="position:absolute;left:1.5px;right:0;bottom:-0.5px;text-align:center">195</span></div>
<div class="abs" style="left:32px;top:498.5px;width:24px;height:1px;background:#e2e2e2"></div>
<div class="abs rowh" style="left:32px;top:499px;width:24px;height:23px"><span style="position:absolute;left:1.5px;right:0;bottom:-0.5px;text-align:center">196</span></div>
<div class="abs" style="left:32px;top:521.5px;width:24px;height:1px;background:#e2e2e2"></div>
<div class="abs rowh" style="left:32px;top:522px;width:24px;height:23px"><span style="position:absolute;left:1.5px;right:0;bottom:-0.5px;text-align:center">197</span></div>
<div class="abs" style="left:32px;top:544.5px;width:24px;height:1px;background:#e2e2e2"></div>
<div class="abs rowh" style="left:32px;top:545px;width:24px;height:23px"><span style="position:absolute;left:1.5px;right:0;bottom:-0.5px;text-align:center">198</span></div>
<div class="abs" style="left:32px;top:567.5px;width:24px;height:1px;background:#e2e2e2"></div>
<div class="abs rowh" style="left:32px;top:568px;width:24px;height:23px"><span style="position:absolute;left:1.5px;right:0;bottom:-0.5px;text-align:center">199</span></div>
<div class="abs" style="left:32px;top:590.5px;width:24px;height:1px;background:#e2e2e2"></div>
<div class="abs rowh" style="left:32px;top:591px;width:24px;height:23px"><span style="position:absolute;left:1.5px;right:0;bottom:-0.5px;text-align:center">200</span></div>
<div class="abs" style="left:32px;top:613.5px;width:24px;height:1px;background:#e2e2e2"></div>
<div class="abs rowh" style="left:32px;top:614px;width:24px;height:23px"><span style="position:absolute;left:1.5px;right:0;bottom:-0.5px;text-align:center">201</span></div>
<div class="abs" style="left:32px;top:636.5px;width:24px;height:1px;background:#e2e2e2"></div>
<div class="abs rowh" style="left:32px;top:637px;width:24px;height:23px"><span style="position:absolute;left:1.5px;right:0;bottom:-0.5px;text-align:center">202</span></div>
<div class="abs" style="left:32px;top:659.5px;width:24px;height:1px;background:#e2e2e2"></div>
<div class="abs rowh" style="left:32px;top:660px;width:24px;height:23px"><span style="position:absolute;left:1.5px;right:0;bottom:-0.5px;text-align:center">203</span></div>
<div class="abs" style="left:32px;top:682.5px;width:24px;height:1px;background:#e2e2e2"></div>
<div class="abs rowh" style="left:32px;top:683px;width:24px;height:23px"><span style="position:absolute;left:1.5px;right:0;bottom:-0.5px;text-align:center">204</span></div>
<div class="abs" style="left:32px;top:705.5px;width:24px;height:1px;background:#e2e2e2"></div>
<div class="abs rowh" style="left:32px;top:706px;width:24px;height:23px"><span style="position:absolute;left:1.5px;right:0;bottom:-0.5px;text-align:center">205</span></div>
<div class="abs" style="left:32px;top:728.5px;width:24px;height:1px;background:#e2e2e2"></div>
<div class="abs rowh" style="left:32px;top:729px;width:24px;height:23px"><span style="position:absolute;left:1.5px;right:0;bottom:-0.5px;text-align:center">206</span></div>
<div class="abs" style="left:32px;top:751.5px;width:24px;height:1px;background:#e2e2e2"></div>
<div class="abs rowh" style="left:32px;top:752px;width:24px;height:23px"><span style="position:absolute;left:1.5px;right:0;bottom:-0.5px;text-align:center">207</span></div>
<div class="abs" style="left:32px;top:774.5px;width:24px;height:1px;background:#e2e2e2"></div>
<div class="abs rowh" style="left:32px;top:775px;width:24px;height:23px"><span style="position:absolute;left:1.5px;right:0;bottom:-0.5px;text-align:center">208</span></div>
<div class="abs" style="left:32px;top:797.5px;width:24px;height:1px;background:#e2e2e2"></div>
<div class="abs rowh" style="left:32px;top:798px;width:24px;height:23px"><span style="position:absolute;left:1.5px;right:0;bottom:-0.5px;text-align:center">209</span></div>
<div class="abs" style="left:32px;top:820.5px;width:24px;height:1px;background:#e2e2e2"></div>
<div class="abs rowh" style="left:32px;top:821px;width:24px;height:23px"><span style="position:absolute;left:1.5px;right:0;bottom:-0.5px;text-align:center">210</span></div>
<div class="abs" style="left:32px;top:843.5px;width:24px;height:1px;background:#e2e2e2"></div>
<div class="abs rowh" style="left:32px;top:844px;width:24px;height:23px"><span style="position:absolute;left:1.5px;right:0;bottom:-0.5px;text-align:center">211</span></div>
<div class="abs" style="left:32px;top:866.5px;width:24px;height:1px;background:#e2e2e2"></div>
<div class="abs rowh" style="left:32px;top:867px;width:24px;height:23px"><span style="position:absolute;left:1.5px;right:0;bottom:-0.5px;text-align:center">212</span></div>
<div class="abs" style="left:32px;top:889.5px;width:24px;height:1px;background:#e2e2e2"></div>
<div class="abs rowh" style="left:32px;top:890px;width:24px;height:23px"><span style="position:absolute;left:1.5px;right:0;bottom:-0.5px;text-align:center">213</span></div>
<div class="abs" style="left:32px;top:912.5px;width:24px;height:1px;background:#e2e2e2"></div>
<div class="abs rowh" style="left:32px;top:913px;width:24px;height:23px"><span style="position:absolute;left:1.5px;right:0;bottom:-0.5px;text-align:center">214</span></div>
<div class="abs" style="left:32px;top:935.5px;width:24px;height:1px;background:#e2e2e2"></div>
<div class="abs rowh" style="left:32px;top:936px;width:24px;height:23px"><span style="position:absolute;left:1.5px;right:0;bottom:-0.5px;text-align:center">215</span></div>
<div class="abs" style="left:32px;top:958.5px;width:24px;height:1px;background:#e2e2e2"></div>
<div class="abs" style="left:0;top:247px;width:32px;height:706px;background:#e6e6e6"></div>
<div class="abs" style="left:2px;top:248px;width:12px;height:12px;border:1px solid #cfcfcf;background:#ececec;box-sizing:border-box"></div>
<div class="abs" style="left:15px;top:248px;width:12px;height:12px;border:1px solid #cfcfcf;background:#ececec;box-sizing:border-box"></div>
<div class="abs" style="left:0;top:371.2px;width:32px;height:1.3px;background:#c8c8c8"></div>
<div class="abs" style="left:0;top:372.5px;width:17px;height:6px;border:1px solid #d0d0d0;background:#f0f0f0;box-sizing:border-box"></div>
<div class="abs" style="left:8px;top:384px;width:2px;height:569px;background:#b8b8b8"></div>
<div class="abs" style="left:10px;top:384px;width:3px;height:8px;background:#dcdcdc"></div>
<div class="abs title" style="left:58px;top:262.5px">City of Norwalk &amp; NPS -- Board of Ed</div>
<div class="abs title" style="left:58px;top:280.5px">FYE 2027 Mayor Recommended</div>
<div class="abs sub" style="left:58.5px;top:297.5px">03/05/26</div>
<div class="abs sub" style="left:58.5px;top:313px">Version 3</div>
<div class="abs cell" style="left:1115.5px;top:310.5px;width:81.5px;height:16px"><span style="position:absolute;right:2px;bottom:1px">2/19/2026</span></div>
<div class="abs hdr" style="left:57.5px;top:344px;width:110px;text-align:center"><u>Division</u></div>
<div class="abs hdr" style="left:167.5px;top:344px;width:56px;text-align:center"><u>Org</u></div>
<div class="abs hdr" style="left:223.5px;top:344px;width:53px;text-align:center"><u>Object</u></div>
<div class="abs hdr" style="left:276.5px;top:344px;width:229px;text-align:center"><u>Description</u></div>
<div class="abs hdr" style="left:505.5px;top:344px;width:205.5px;text-align:center"><u>Department</u></div>
<div class="abs hdr" style="left:709.5px;top:336px;width:78.0px;text-align:right;line-height:15px;height:30px;overflow:hidden"><u>FY &#x27;23</u><br><u>Actuals</u></div>
<div class="abs hdr" style="left:789.5px;top:336px;width:78.0px;text-align:right;line-height:15px;height:30px;overflow:hidden"><u>FY &#x27;24</u><br><u>Actuals</u></div>
<div class="abs hdr" style="left:869.5px;top:336px;width:82.0px;text-align:right;line-height:15px;height:30px;overflow:hidden"><u>FY &#x27;25</u><br><u>Actuals</u></div>
<div class="abs hdr" style="left:953.5px;top:336px;width:78.5px;text-align:right;line-height:15px;height:30px;overflow:hidden"><u>FY &#x27;26</u><br><u>Approved</u></div>
<div class="abs hdr" style="left:1034px;top:336px;width:79.5px;text-align:right;line-height:15px;height:30px;overflow:hidden"><u>FY &#x27;26</u><br><u>Revised</u></div>
<div class="abs hdr" style="left:1115.5px;top:336px;width:79.5px;text-align:right;line-height:15px;height:30px;overflow:hidden"><u>FY &#x27;26</u><br><u>Actuals</u></div>
<div class="abs hdr" style="left:1197px;top:336px;width:67px;text-align:right;line-height:15px;height:30px;overflow:hidden"><u>FY &#x27;26</u><br><u>Encumb</u></div>
<div class="abs hdr" style="left:1266px;top:336px;width:79.5px;text-align:right;line-height:15px;height:30px;overflow:hidden"><u>FY &#x27;26</u><br><u>Remain</u></div>
<div class="abs hdr" style="left:1347.5px;top:336px;width:79.5px;text-align:right;line-height:15px;height:30px;overflow:hidden"><u>FY &#x27;27</u><br><u>Request</u></div>
<div class="abs hdr" style="left:1617px;top:336px;width:82px;text-align:right;line-height:15px;height:30px;overflow:hidden"><u>FY &#x27;27</u><br><u>CFO/Mayor</u></div>
<div class="abs hdr" style="left:1429px;top:328px;width:145px;text-align:center;line-height:15px"><u>&#x27;27 Request vs. &#x27;26</u><br><u>Revised</u></div>
<div class="abs hdr" style="left:1439px;top:358px;width:40px;text-align:center;line-height:14px">$</div>
<div class="abs hdr" style="left:1522px;top:358px;width:40px;text-align:center;line-height:14px">%</div>
<div class="abs hdr" style="left:1701px;top:328px;width:145.5px;text-align:center;line-height:15px"><u>&#x27;27 CFO/Myr vs. &#x27;26</u><br><u>Revised</u></div>
<div class="abs hdr" style="left:1711px;top:358px;width:40px;text-align:center;line-height:14px">$</div>
<div class="abs hdr" style="left:1795px;top:358px;width:40px;text-align:center;line-height:14px">%</div>
<div class="abs fbtn" style="left:153.5px;top:359.5px"></div>
<div class="abs fbtn" style="left:209.5px;top:359.5px"></div>
<div class="abs fbtn" style="left:262.5px;top:359.5px"></div>
<div class="abs fbtn" style="left:491.5px;top:359.5px"></div>
<div class="abs fbtn" style="left:697.0px;top:359.5px"></div>
<div class="abs fbtn" style="left:777.0px;top:359.5px"></div>
<div class="abs fbtn" style="left:857.0px;top:359.5px"></div>
<div class="abs fbtn" style="left:941.0px;top:359.5px"></div>
<div class="abs fbtn" style="left:1021.5px;top:359.5px"></div>
<div class="abs" style="left:56px;top:372.5px;width:1848px;height:11px;overflow:hidden">
<span class="abs b" style="left:451px;top:-6px">SMOKE CESSATION Total</span>
<span class="abs b" style="right:1120.5px;top:-6px">$22,377</span>
<span class="abs b" style="right:1040.5px;top:-6px">$0</span>
<span class="abs b" style="right:956.5px;top:-6px">$0</span>
<span class="abs b" style="right:876px;top:-6px">$0</span>
<span class="abs b" style="right:794.5px;top:-6px">$0</span>
<span class="abs b" style="right:713px;top:-6px">$0</span>
<span class="abs b" style="right:644px;top:-6px">$0</span>
<span class="abs b" style="right:562.5px;top:-6px">$0</span>
<span class="abs b" style="right:481px;top:-6px">$0</span>
<span class="abs b" style="right:409px;top:-6px">$0</span>
<span class="abs b" style="right:332.5px;top:-6px">0</span>
<span class="abs b" style="right:209px;top:-6px">$0</span>
<span class="abs b" style="right:136px;top:-6px">$0</span>
<span class="abs b" style="right:60.0px;top:-6px">0</span>
</div>
<div class="abs cell " style="left:56px;top:384px;width:110px;height:23px;overflow:visible"><span style="position:absolute;left:2.5px;bottom:5.5px;white-space:nowrap;">COMMUNITY SVCS</span></div>
<div class="abs cell " style="left:166px;top:384px;width:56px;height:23px"><span style="position:absolute;left:1.5px;right:0;text-align:center;bottom:5.5px;">16200</span></div>
<div class="abs cell " style="left:222px;top:384px;width:53px;height:23px"><span style="position:absolute;left:1.5px;right:0;text-align:center;bottom:5.5px;">5110</span></div>
<div class="abs cell " style="left:275px;top:384px;width:229px;height:23px;overflow:visible"><span style="position:absolute;left:3.3px;bottom:5.5px;white-space:nowrap;">WAGES &amp; SALARY-REGULAR</span></div>
<div class="abs cell " style="left:504px;top:384px;width:205.5px;height:23px;overflow:visible"><span style="position:absolute;left:3.3px;bottom:5.5px;white-space:nowrap;">LIBRARY ADMIN/PGMS</span></div>
<div class="abs cell " style="left:709.5px;top:384px;width:80.0px;height:23px"><span style="position:absolute;right:6px;bottom:5.5px;">$1,662,013</span></div>
<div class="abs cell " style="left:789.5px;top:384px;width:80.0px;height:23px"><span style="position:absolute;right:6px;bottom:5.5px;">$1,630,746</span></div>
<div class="abs cell " style="left:869.5px;top:384px;width:84.0px;height:23px"><span style="position:absolute;right:6px;bottom:5.5px;">$1,855,058</span></div>
<div class="abs cell " style="left:953.5px;top:384px;width:80.5px;height:23px"><span style="position:absolute;right:6px;bottom:5.5px;">$2,106,529</span></div>
<div class="abs cell " style="left:1034px;top:384px;width:81.5px;height:23px"><span style="position:absolute;right:6px;bottom:5.5px;">$2,106,529</span></div>
<div class="abs cell " style="left:1115.5px;top:384px;width:81.5px;height:23px"><span style="position:absolute;right:6px;bottom:5.5px;">$1,227,472</span></div>
<div class="abs cell " style="left:1197px;top:384px;width:69px;height:23px"><span style="position:absolute;right:6px;bottom:5.5px;">$0</span></div>
<div class="abs cell " style="left:1266px;top:384px;width:81.5px;height:23px"><span style="position:absolute;right:6px;bottom:5.5px;">$879,057</span></div>
<div class="abs cell " style="left:1347.5px;top:384px;width:81.5px;height:23px"><span style="position:absolute;right:6px;bottom:5.5px;">$2,298,865</span></div>
<div class="abs cell " style="left:1429px;top:384px;width:72px;height:23px"><span style="position:absolute;right:6px;bottom:5.5px;">$192,336</span></div>
<div class="abs cell " style="left:1501px;top:384px;width:73px;height:23px"><span style="position:absolute;right:2.5px;bottom:5.5px;">9.1%</span></div>
<div class="abs cell " style="left:1617px;top:384px;width:84px;height:23px"><span style="position:absolute;right:6px;bottom:5.5px;">$2,300,857</span></div>
<div class="abs cell " style="left:1701px;top:384px;width:73px;height:23px"><span style="position:absolute;right:6px;bottom:5.5px;">$194,328</span></div>
<div class="abs cell " style="left:1774px;top:384px;width:72.5px;height:23px"><span style="position:absolute;right:2.5px;bottom:5.5px;">9.2%</span></div>
<svg class="abs" style="left:167px;top:385px" width="6" height="6"><path d="M0 0H5L0 5Z" fill="#1e7a3a"/></svg>
<svg class="abs" style="left:223px;top:385px" width="6" height="6"><path d="M0 0H5L0 5Z" fill="#1e7a3a"/></svg>
<div class="abs cell " style="left:56px;top:407px;width:110px;height:23px;overflow:visible"><span style="position:absolute;left:2.5px;bottom:5.5px;white-space:nowrap;">COMMUNITY SVCS</span></div>
<div class="abs cell " style="left:166px;top:407px;width:56px;height:23px"><span style="position:absolute;left:1.5px;right:0;text-align:center;bottom:5.5px;">16200</span></div>
<div class="abs cell " style="left:222px;top:407px;width:53px;height:23px"><span style="position:absolute;left:1.5px;right:0;text-align:center;bottom:5.5px;">5120</span></div>
<div class="abs cell " style="left:275px;top:407px;width:229px;height:23px;overflow:visible"><span style="position:absolute;left:3.3px;bottom:5.5px;white-space:nowrap;">WAGES &amp; SALARY-OVERTIME</span></div>
<div class="abs cell " style="left:504px;top:407px;width:205.5px;height:23px;overflow:visible"><span style="position:absolute;left:3.3px;bottom:5.5px;white-space:nowrap;">LIBRARY ADMIN/PGMS</span></div>
<div class="abs cell " style="left:709.5px;top:407px;width:80.0px;height:23px"><span style="position:absolute;right:6px;bottom:5.5px;">$35,624</span></div>
<div class="abs cell " style="left:789.5px;top:407px;width:80.0px;height:23px"><span style="position:absolute;right:6px;bottom:5.5px;">$50,528</span></div>
<div class="abs cell " style="left:869.5px;top:407px;width:84.0px;height:23px"><span style="position:absolute;right:6px;bottom:5.5px;">$39,908</span></div>
<div class="abs cell " style="left:953.5px;top:407px;width:80.5px;height:23px"><span style="position:absolute;right:6px;bottom:5.5px;">$35,000</span></div>
<div class="abs cell " style="left:1034px;top:407px;width:81.5px;height:23px"><span style="position:absolute;right:6px;bottom:5.5px;">$35,000</span></div>
<div class="abs cell " style="left:1115.5px;top:407px;width:81.5px;height:23px"><span style="position:absolute;right:6px;bottom:5.5px;">$33,642</span></div>
<div class="abs cell " style="left:1197px;top:407px;width:69px;height:23px"><span style="position:absolute;right:6px;bottom:5.5px;">$0</span></div>
<div class="abs cell " style="left:1266px;top:407px;width:81.5px;height:23px"><span style="position:absolute;right:6px;bottom:5.5px;">$1,358</span></div>
<div class="abs cell " style="left:1347.5px;top:407px;width:81.5px;height:23px"><span style="position:absolute;right:6px;bottom:5.5px;">$35,000</span></div>
<div class="abs cell " style="left:1429px;top:407px;width:72px;height:23px"><span style="position:absolute;right:6px;bottom:5.5px;">$0</span></div>
<div class="abs cell " style="left:1501px;top:407px;width:73px;height:23px"><span style="position:absolute;right:2.5px;bottom:5.5px;">0.0%</span></div>
<div class="abs cell " style="left:1617px;top:407px;width:84px;height:23px"><span style="position:absolute;right:6px;bottom:5.5px;">$35,000</span></div>
<div class="abs cell " style="left:1701px;top:407px;width:73px;height:23px"><span style="position:absolute;right:6px;bottom:5.5px;">$0</span></div>
<div class="abs cell " style="left:1774px;top:407px;width:72.5px;height:23px"><span style="position:absolute;right:2.5px;bottom:5.5px;">0.0%</span></div>
<svg class="abs" style="left:167px;top:408px" width="6" height="6"><path d="M0 0H5L0 5Z" fill="#1e7a3a"/></svg>
<svg class="abs" style="left:223px;top:408px" width="6" height="6"><path d="M0 0H5L0 5Z" fill="#1e7a3a"/></svg>
<div class="abs cell " style="left:56px;top:430px;width:110px;height:23px;overflow:visible"><span style="position:absolute;left:2.5px;bottom:5.5px;white-space:nowrap;">COMMUNITY SVCS</span></div>
<div class="abs cell " style="left:166px;top:430px;width:56px;height:23px"><span style="position:absolute;left:1.5px;right:0;text-align:center;bottom:5.5px;">16200</span></div>
<div class="abs cell " style="left:222px;top:430px;width:53px;height:23px"><span style="position:absolute;left:1.5px;right:0;text-align:center;bottom:5.5px;">5121</span></div>
<div class="abs cell " style="left:275px;top:430px;width:229px;height:23px;overflow:visible"><span style="position:absolute;left:3.3px;bottom:5.5px;white-space:nowrap;">WAGES &amp; SALARY-PREMIUM</span></div>
<div class="abs cell " style="left:504px;top:430px;width:205.5px;height:23px;overflow:visible"><span style="position:absolute;left:3.3px;bottom:5.5px;white-space:nowrap;">LIBRARY ADMIN/PGMS</span></div>
<div class="abs cell " style="left:709.5px;top:430px;width:80.0px;height:23px"><span style="position:absolute;right:6px;bottom:5.5px;">$4,593</span></div>
<div class="abs cell " style="left:789.5px;top:430px;width:80.0px;height:23px"><span style="position:absolute;right:6px;bottom:5.5px;">$5,035</span></div>
<div class="abs cell " style="left:869.5px;top:430px;width:84.0px;height:23px"><span style="position:absolute;right:6px;bottom:5.5px;">$4,649</span></div>
<div class="abs cell " style="left:953.5px;top:430px;width:80.5px;height:23px"><span style="position:absolute;right:6px;bottom:5.5px;">$6,192</span></div>
<div class="abs cell " style="left:1034px;top:430px;width:81.5px;height:23px"><span style="position:absolute;right:6px;bottom:5.5px;">$6,192</span></div>
<div class="abs cell " style="left:1115.5px;top:430px;width:81.5px;height:23px"><span style="position:absolute;right:6px;bottom:5.5px;">$673</span></div>
<div class="abs cell " style="left:1197px;top:430px;width:69px;height:23px"><span style="position:absolute;right:6px;bottom:5.5px;">$0</span></div>
<div class="abs cell " style="left:1266px;top:430px;width:81.5px;height:23px"><span style="position:absolute;right:6px;bottom:5.5px;">$5,519</span></div>
<div class="abs cell " style="left:1347.5px;top:430px;width:81.5px;height:23px"><span style="position:absolute;right:6px;bottom:5.5px;">$6,192</span></div>
<div class="abs cell " style="left:1429px;top:430px;width:72px;height:23px"><span style="position:absolute;right:6px;bottom:5.5px;">$0</span></div>
<div class="abs cell " style="left:1501px;top:430px;width:73px;height:23px"><span style="position:absolute;right:2.5px;bottom:5.5px;">0.0%</span></div>
<div class="abs cell " style="left:1617px;top:430px;width:84px;height:23px"><span style="position:absolute;right:6px;bottom:5.5px;">$6,192</span></div>
<div class="abs cell " style="left:1701px;top:430px;width:73px;height:23px"><span style="position:absolute;right:6px;bottom:5.5px;">$0</span></div>
<div class="abs cell " style="left:1774px;top:430px;width:72.5px;height:23px"><span style="position:absolute;right:2.5px;bottom:5.5px;">0.0%</span></div>
<svg class="abs" style="left:167px;top:431px" width="6" height="6"><path d="M0 0H5L0 5Z" fill="#1e7a3a"/></svg>
<svg class="abs" style="left:223px;top:431px" width="6" height="6"><path d="M0 0H5L0 5Z" fill="#1e7a3a"/></svg>
<div class="abs cell " style="left:56px;top:453px;width:110px;height:23px;overflow:visible"><span style="position:absolute;left:2.5px;bottom:5.5px;white-space:nowrap;">COMMUNITY SVCS</span></div>
<div class="abs cell " style="left:166px;top:453px;width:56px;height:23px"><span style="position:absolute;left:1.5px;right:0;text-align:center;bottom:5.5px;">16200</span></div>
<div class="abs cell " style="left:222px;top:453px;width:53px;height:23px"><span style="position:absolute;left:1.5px;right:0;text-align:center;bottom:5.5px;">5140</span></div>
<div class="abs cell " style="left:275px;top:453px;width:229px;height:23px;overflow:visible"><span style="position:absolute;left:3.3px;bottom:5.5px;white-space:nowrap;">WAGES &amp; SALARY-PART TIME</span></div>
<div class="abs cell " style="left:504px;top:453px;width:205.5px;height:23px;overflow:visible"><span style="position:absolute;left:3.3px;bottom:5.5px;white-space:nowrap;">LIBRARY ADMIN/PGMS</span></div>
<div class="abs cell " style="left:709.5px;top:453px;width:80.0px;height:23px"><span style="position:absolute;right:6px;bottom:5.5px;">$638,183</span></div>
<div class="abs cell " style="left:789.5px;top:453px;width:80.0px;height:23px"><span style="position:absolute;right:6px;bottom:5.5px;">$600,634</span></div>
<div class="abs cell " style="left:869.5px;top:453px;width:84.0px;height:23px"><span style="position:absolute;right:6px;bottom:5.5px;">$653,156</span></div>
<div class="abs cell " style="left:953.5px;top:453px;width:80.5px;height:23px"><span style="position:absolute;right:6px;bottom:5.5px;">$671,002</span></div>
<div class="abs cell " style="left:1034px;top:453px;width:81.5px;height:23px"><span style="position:absolute;right:6px;bottom:5.5px;">$671,002</span></div>
<div class="abs cell " style="left:1115.5px;top:453px;width:81.5px;height:23px"><span style="position:absolute;right:6px;bottom:5.5px;">$489,900</span></div>
<div class="abs cell " style="left:1197px;top:453px;width:69px;height:23px"><span style="position:absolute;right:6px;bottom:5.5px;">$3,417</span></div>
<div class="abs cell " style="left:1266px;top:453px;width:81.5px;height:23px"><span style="position:absolute;right:6px;bottom:5.5px;">$177,685</span></div>
<div class="abs cell " style="left:1347.5px;top:453px;width:81.5px;height:23px"><span style="position:absolute;right:6px;bottom:5.5px;">$771,002</span></div>
<div class="abs cell " style="left:1429px;top:453px;width:72px;height:23px"><span style="position:absolute;right:6px;bottom:5.5px;">$100,000</span></div>
<div class="abs cell " style="left:1501px;top:453px;width:73px;height:23px"><span style="position:absolute;right:2.5px;bottom:5.5px;">14.9%</span></div>
<div class="abs cell " style="left:1617px;top:453px;width:84px;height:23px"><span style="position:absolute;right:6px;bottom:5.5px;">$771,002</span></div>
<div class="abs cell " style="left:1701px;top:453px;width:73px;height:23px"><span style="position:absolute;right:6px;bottom:5.5px;">$100,000</span></div>
<div class="abs cell " style="left:1774px;top:453px;width:72.5px;height:23px"><span style="position:absolute;right:2.5px;bottom:5.5px;">14.9%</span></div>
<svg class="abs" style="left:167px;top:454px" width="6" height="6"><path d="M0 0H5L0 5Z" fill="#1e7a3a"/></svg>
<svg class="abs" style="left:223px;top:454px" width="6" height="6"><path d="M0 0H5L0 5Z" fill="#1e7a3a"/></svg>
<div class="abs cell " style="left:56px;top:476px;width:110px;height:23px;overflow:visible"><span style="position:absolute;left:2.5px;bottom:5.5px;white-space:nowrap;">COMMUNITY SVCS</span></div>
<div class="abs cell " style="left:166px;top:476px;width:56px;height:23px"><span style="position:absolute;left:1.5px;right:0;text-align:center;bottom:5.5px;">16200</span></div>
<div class="abs cell " style="left:222px;top:476px;width:53px;height:23px"><span style="position:absolute;left:1.5px;right:0;text-align:center;bottom:5.5px;">5150</span></div>
<div class="abs cell " style="left:275px;top:476px;width:229px;height:23px;overflow:visible"><span style="position:absolute;left:3.3px;bottom:5.5px;white-space:nowrap;">LONGEVITY</span></div>
<div class="abs cell " style="left:504px;top:476px;width:205.5px;height:23px;overflow:visible"><span style="position:absolute;left:3.3px;bottom:5.5px;white-space:nowrap;">LIBRARY ADMIN/PGMS</span></div>
<div class="abs cell " style="left:709.5px;top:476px;width:80.0px;height:23px"><span style="position:absolute;right:6px;bottom:5.5px;">$5,800</span></div>
<div class="abs cell " style="left:789.5px;top:476px;width:80.0px;height:23px"><span style="position:absolute;right:6px;bottom:5.5px;">$5,635</span></div>
<div class="abs cell " style="left:869.5px;top:476px;width:84.0px;height:23px"><span style="position:absolute;right:6px;bottom:5.5px;">$5,525</span></div>
<div class="abs cell " style="left:953.5px;top:476px;width:80.5px;height:23px"><span style="position:absolute;right:6px;bottom:5.5px;">$6,000</span></div>
<div class="abs cell " style="left:1034px;top:476px;width:81.5px;height:23px"><span style="position:absolute;right:6px;bottom:5.5px;">$6,000</span></div>
<div class="abs cell " style="left:1115.5px;top:476px;width:81.5px;height:23px"><span style="position:absolute;right:6px;bottom:5.5px;">$9,510</span></div>
<div class="abs cell " style="left:1197px;top:476px;width:69px;height:23px"><span style="position:absolute;right:6px;bottom:5.5px;">$0</span></div>
<div class="abs cell " style="left:1266px;top:476px;width:81.5px;height:23px"><span style="position:absolute;right:2.5px;bottom:5.5px;">($3,510)</span></div>
<div class="abs cell " style="left:1347.5px;top:476px;width:81.5px;height:23px"><span style="position:absolute;right:6px;bottom:5.5px;">$6,000</span></div>
<div class="abs cell " style="left:1429px;top:476px;width:72px;height:23px"><span style="position:absolute;right:6px;bottom:5.5px;">$0</span></div>
<div class="abs cell " style="left:1501px;top:476px;width:73px;height:23px"><span style="position:absolute;right:2.5px;bottom:5.5px;">0.0%</span></div>
<div class="abs cell " style="left:1617px;top:476px;width:84px;height:23px"><span style="position:absolute;right:6px;bottom:5.5px;">$6,000</span></div>
<div class="abs cell " style="left:1701px;top:476px;width:73px;height:23px"><span style="position:absolute;right:6px;bottom:5.5px;">$0</span></div>
<div class="abs cell " style="left:1774px;top:476px;width:72.5px;height:23px"><span style="position:absolute;right:2.5px;bottom:5.5px;">0.0%</span></div>
<svg class="abs" style="left:167px;top:477px" width="6" height="6"><path d="M0 0H5L0 5Z" fill="#1e7a3a"/></svg>
<svg class="abs" style="left:223px;top:477px" width="6" height="6"><path d="M0 0H5L0 5Z" fill="#1e7a3a"/></svg>
<div class="abs cell " style="left:56px;top:499px;width:110px;height:23px;overflow:visible"><span style="position:absolute;left:2.5px;bottom:5.5px;white-space:nowrap;">COMMUNITY SVCS</span></div>
<div class="abs cell " style="left:166px;top:499px;width:56px;height:23px"><span style="position:absolute;left:1.5px;right:0;text-align:center;bottom:5.5px;">16200</span></div>
<div class="abs cell " style="left:222px;top:499px;width:53px;height:23px"><span style="position:absolute;left:1.5px;right:0;text-align:center;bottom:5.5px;">5175</span></div>
<div class="abs cell " style="left:275px;top:499px;width:229px;height:23px;overflow:visible"><span style="position:absolute;left:3.3px;bottom:5.5px;white-space:nowrap;">RETRO WAGE ADJUSTMENTS</span></div>
<div class="abs cell " style="left:504px;top:499px;width:205.5px;height:23px;overflow:visible"><span style="position:absolute;left:3.3px;bottom:5.5px;white-space:nowrap;">LIBRARY ADMIN/PGMS</span></div>
<div class="abs cell " style="left:709.5px;top:499px;width:80.0px;height:23px"><span style="position:absolute;right:6px;bottom:5.5px;">$0</span></div>
<div class="abs cell " style="left:789.5px;top:499px;width:80.0px;height:23px"><span style="position:absolute;right:6px;bottom:5.5px;">$0</span></div>
<div class="abs cell " style="left:869.5px;top:499px;width:84.0px;height:23px"><span style="position:absolute;right:6px;bottom:5.5px;">$0</span></div>
<div class="abs cell " style="left:953.5px;top:499px;width:80.5px;height:23px"><span style="position:absolute;right:6px;bottom:5.5px;">$0</span></div>
<div class="abs cell " style="left:1034px;top:499px;width:81.5px;height:23px"><span style="position:absolute;right:6px;bottom:5.5px;">$0</span></div>
<div class="abs cell " style="left:1115.5px;top:499px;width:81.5px;height:23px"><span style="position:absolute;right:6px;bottom:5.5px;">$706</span></div>
<div class="abs cell " style="left:1197px;top:499px;width:69px;height:23px"><span style="position:absolute;right:6px;bottom:5.5px;">$0</span></div>
<div class="abs cell " style="left:1266px;top:499px;width:81.5px;height:23px"><span style="position:absolute;right:2.5px;bottom:5.5px;">($706)</span></div>
<div class="abs cell " style="left:1347.5px;top:499px;width:81.5px;height:23px"><span style="position:absolute;right:6px;bottom:5.5px;">$0</span></div>
<div class="abs cell " style="left:1429px;top:499px;width:72px;height:23px"><span style="position:absolute;right:6px;bottom:5.5px;">$0</span></div>
<div class="abs cell " style="left:1501px;top:499px;width:73px;height:23px"><span style="position:absolute;right:2.5px;bottom:5.5px;">0</span></div>
<div class="abs cell " style="left:1617px;top:499px;width:84px;height:23px"><span style="position:absolute;right:6px;bottom:5.5px;">$0</span></div>
<div class="abs cell " style="left:1701px;top:499px;width:73px;height:23px"><span style="position:absolute;right:6px;bottom:5.5px;">$0</span></div>
<div class="abs cell " style="left:1774px;top:499px;width:72.5px;height:23px"><span style="position:absolute;right:2.5px;bottom:5.5px;">0</span></div>
<svg class="abs" style="left:167px;top:500px" width="6" height="6"><path d="M0 0H5L0 5Z" fill="#1e7a3a"/></svg>
<svg class="abs" style="left:223px;top:500px" width="6" height="6"><path d="M0 0H5L0 5Z" fill="#1e7a3a"/></svg>
<div class="abs cell " style="left:56px;top:522px;width:110px;height:23px;overflow:visible"><span style="position:absolute;left:2.5px;bottom:5.5px;white-space:nowrap;">COMMUNITY SVCS</span></div>
<div class="abs cell " style="left:166px;top:522px;width:56px;height:23px"><span style="position:absolute;left:1.5px;right:0;text-align:center;bottom:5.5px;">16200</span></div>
<div class="abs cell " style="left:222px;top:522px;width:53px;height:23px"><span style="position:absolute;left:1.5px;right:0;text-align:center;bottom:5.5px;">5211</span></div>
<div class="abs cell " style="left:275px;top:522px;width:229px;height:23px;overflow:visible"><span style="position:absolute;left:3.3px;bottom:5.5px;white-space:nowrap;">POSTAGE,BOX RENT,ETC.</span></div>
<div class="abs cell " style="left:504px;top:522px;width:205.5px;height:23px;overflow:visible"><span style="position:absolute;left:3.3px;bottom:5.5px;white-space:nowrap;">LIBRARY ADMIN/PGMS</span></div>
<div class="abs cell " style="left:709.5px;top:522px;width:80.0px;height:23px"><span style="position:absolute;right:6px;bottom:5.5px;">$706</span></div>
<div class="abs cell " style="left:789.5px;top:522px;width:80.0px;height:23px"><span style="position:absolute;right:6px;bottom:5.5px;">$864</span></div>
<div class="abs cell " style="left:869.5px;top:522px;width:84.0px;height:23px"><span style="position:absolute;right:6px;bottom:5.5px;">$1,072</span></div>
<div class="abs cell " style="left:953.5px;top:522px;width:80.5px;height:23px"><span style="position:absolute;right:6px;bottom:5.5px;">$1,500</span></div>
<div class="abs cell " style="left:1034px;top:522px;width:81.5px;height:23px"><span style="position:absolute;right:6px;bottom:5.5px;">$1,500</span></div>
<div class="abs cell " style="left:1115.5px;top:522px;width:81.5px;height:23px"><span style="position:absolute;right:6px;bottom:5.5px;">$1,325</span></div>
<div class="abs cell " style="left:1197px;top:522px;width:69px;height:23px"><span style="position:absolute;right:6px;bottom:5.5px;">$0</span></div>
<div class="abs cell " style="left:1266px;top:522px;width:81.5px;height:23px"><span style="position:absolute;right:6px;bottom:5.5px;">$175</span></div>
<div class="abs cell " style="left:1347.5px;top:522px;width:81.5px;height:23px"><span style="position:absolute;right:6px;bottom:5.5px;">$1,500</span></div>
<div class="abs cell " style="left:1429px;top:522px;width:72px;height:23px"><span style="position:absolute;right:6px;bottom:5.5px;">$0</span></div>
<div class="abs cell " style="left:1501px;top:522px;width:73px;height:23px"><span style="position:absolute;right:2.5px;bottom:5.5px;">0.0%</span></div>
<div class="abs cell " style="left:1617px;top:522px;width:84px;height:23px"><span style="position:absolute;right:6px;bottom:5.5px;">$1,500</span></div>
<div class="abs cell " style="left:1701px;top:522px;width:73px;height:23px"><span style="position:absolute;right:6px;bottom:5.5px;">$0</span></div>
<div class="abs cell " style="left:1774px;top:522px;width:72.5px;height:23px"><span style="position:absolute;right:2.5px;bottom:5.5px;">0.0%</span></div>
<svg class="abs" style="left:167px;top:523px" width="6" height="6"><path d="M0 0H5L0 5Z" fill="#1e7a3a"/></svg>
<svg class="abs" style="left:223px;top:523px" width="6" height="6"><path d="M0 0H5L0 5Z" fill="#1e7a3a"/></svg>
<div class="abs cell " style="left:56px;top:545px;width:110px;height:23px;overflow:visible"><span style="position:absolute;left:2.5px;bottom:5.5px;white-space:nowrap;">COMMUNITY SVCS</span></div>
<div class="abs cell " style="left:166px;top:545px;width:56px;height:23px"><span style="position:absolute;left:1.5px;right:0;text-align:center;bottom:5.5px;">16200</span></div>
<div class="abs cell " style="left:222px;top:545px;width:53px;height:23px"><span style="position:absolute;left:1.5px;right:0;text-align:center;bottom:5.5px;">5221</span></div>
<div class="abs cell " style="left:275px;top:545px;width:229px;height:23px;overflow:visible"><span style="position:absolute;left:3.3px;bottom:5.5px;white-space:nowrap;">PRINTING &amp; DUPLICATION</span></div>
<div class="abs cell " style="left:504px;top:545px;width:205.5px;height:23px;overflow:visible"><span style="position:absolute;left:3.3px;bottom:5.5px;white-space:nowrap;">LIBRARY ADMIN/PGMS</span></div>
<div class="abs cell " style="left:709.5px;top:545px;width:80.0px;height:23px"><span style="position:absolute;right:6px;bottom:5.5px;">$21,294</span></div>
<div class="abs cell " style="left:789.5px;top:545px;width:80.0px;height:23px"><span style="position:absolute;right:6px;bottom:5.5px;">$14,618</span></div>
<div class="abs cell " style="left:869.5px;top:545px;width:84.0px;height:23px"><span style="position:absolute;right:6px;bottom:5.5px;">$19,202</span></div>
<div class="abs cell " style="left:953.5px;top:545px;width:80.5px;height:23px"><span style="position:absolute;right:6px;bottom:5.5px;">$20,000</span></div>
<div class="abs cell " style="left:1034px;top:545px;width:81.5px;height:23px"><span style="position:absolute;right:6px;bottom:5.5px;">$20,000</span></div>
<div class="abs cell " style="left:1115.5px;top:545px;width:81.5px;height:23px"><span style="position:absolute;right:6px;bottom:5.5px;">$10,423</span></div>
<div class="abs cell " style="left:1197px;top:545px;width:69px;height:23px"><span style="position:absolute;right:6px;bottom:5.5px;">$1,433</span></div>
<div class="abs cell " style="left:1266px;top:545px;width:81.5px;height:23px"><span style="position:absolute;right:6px;bottom:5.5px;">$8,144</span></div>
<div class="abs cell " style="left:1347.5px;top:545px;width:81.5px;height:23px"><span style="position:absolute;right:6px;bottom:5.5px;">$20,000</span></div>
<div class="abs cell " style="left:1429px;top:545px;width:72px;height:23px"><span style="position:absolute;right:6px;bottom:5.5px;">$0</span></div>
<div class="abs cell " style="left:1501px;top:545px;width:73px;height:23px"><span style="position:absolute;right:2.5px;bottom:5.5px;">0.0%</span></div>
<div class="abs cell " style="left:1617px;top:545px;width:84px;height:23px"><span style="position:absolute;right:6px;bottom:5.5px;">$20,000</span></div>
<div class="abs cell " style="left:1701px;top:545px;width:73px;height:23px"><span style="position:absolute;right:6px;bottom:5.5px;">$0</span></div>
<div class="abs cell " style="left:1774px;top:545px;width:72.5px;height:23px"><span style="position:absolute;right:2.5px;bottom:5.5px;">0.0%</span></div>
<svg class="abs" style="left:167px;top:546px" width="6" height="6"><path d="M0 0H5L0 5Z" fill="#1e7a3a"/></svg>
<svg class="abs" style="left:223px;top:546px" width="6" height="6"><path d="M0 0H5L0 5Z" fill="#1e7a3a"/></svg>
<div class="abs cell " style="left:56px;top:568px;width:110px;height:23px;overflow:visible"><span style="position:absolute;left:2.5px;bottom:5.5px;white-space:nowrap;">COMMUNITY SVCS</span></div>
<div class="abs cell " style="left:166px;top:568px;width:56px;height:23px"><span style="position:absolute;left:1.5px;right:0;text-align:center;bottom:5.5px;">16200</span></div>
<div class="abs cell " style="left:222px;top:568px;width:53px;height:23px"><span style="position:absolute;left:1.5px;right:0;text-align:center;bottom:5.5px;">5225</span></div>
<div class="abs cell " style="left:275px;top:568px;width:229px;height:23px;overflow:visible"><span style="position:absolute;left:3.3px;bottom:5.5px;white-space:nowrap;">TYPING SERVICES</span></div>
<div class="abs cell " style="left:504px;top:568px;width:205.5px;height:23px;overflow:visible"><span style="position:absolute;left:3.3px;bottom:5.5px;white-space:nowrap;">LIBRARY ADMIN/PGMS</span></div>
<div class="abs cell " style="left:709.5px;top:568px;width:80.0px;height:23px"><span style="position:absolute;right:6px;bottom:5.5px;">$1,470</span></div>
<div class="abs cell " style="left:789.5px;top:568px;width:80.0px;height:23px"><span style="position:absolute;right:6px;bottom:5.5px;">$1,630</span></div>
<div class="abs cell " style="left:869.5px;top:568px;width:84.0px;height:23px"><span style="position:absolute;right:6px;bottom:5.5px;">$1,490</span></div>
<div class="abs cell " style="left:953.5px;top:568px;width:80.5px;height:23px"><span style="position:absolute;right:6px;bottom:5.5px;">$2,500</span></div>
<div class="abs cell " style="left:1034px;top:568px;width:81.5px;height:23px"><span style="position:absolute;right:6px;bottom:5.5px;">$0</span></div>
<div class="abs cell " style="left:1115.5px;top:568px;width:81.5px;height:23px"><span style="position:absolute;right:6px;bottom:5.5px;">$0</span></div>
<div class="abs cell " style="left:1197px;top:568px;width:69px;height:23px"><span style="position:absolute;right:6px;bottom:5.5px;">$0</span></div>
<div class="abs cell " style="left:1266px;top:568px;width:81.5px;height:23px"><span style="position:absolute;right:6px;bottom:5.5px;">$0</span></div>
<div class="abs cell " style="left:1347.5px;top:568px;width:81.5px;height:23px"><span style="position:absolute;right:6px;bottom:5.5px;">$0</span></div>
<div class="abs cell " style="left:1429px;top:568px;width:72px;height:23px"><span style="position:absolute;right:6px;bottom:5.5px;">$0</span></div>
<div class="abs cell " style="left:1501px;top:568px;width:73px;height:23px"><span style="position:absolute;right:2.5px;bottom:5.5px;">0</span></div>
<div class="abs cell " style="left:1617px;top:568px;width:84px;height:23px"><span style="position:absolute;right:6px;bottom:5.5px;">$0</span></div>
<div class="abs cell " style="left:1701px;top:568px;width:73px;height:23px"><span style="position:absolute;right:6px;bottom:5.5px;">$0</span></div>
<div class="abs cell " style="left:1774px;top:568px;width:72.5px;height:23px"><span style="position:absolute;right:2.5px;bottom:5.5px;">0</span></div>
<svg class="abs" style="left:167px;top:569px" width="6" height="6"><path d="M0 0H5L0 5Z" fill="#1e7a3a"/></svg>
<svg class="abs" style="left:223px;top:569px" width="6" height="6"><path d="M0 0H5L0 5Z" fill="#1e7a3a"/></svg>
<div class="abs cell " style="left:56px;top:591px;width:110px;height:23px;overflow:visible"><span style="position:absolute;left:2.5px;bottom:5.5px;white-space:nowrap;">COMMUNITY SVCS</span></div>
<div class="abs cell " style="left:166px;top:591px;width:56px;height:23px"><span style="position:absolute;left:1.5px;right:0;text-align:center;bottom:5.5px;">16200</span></div>
<div class="abs cell " style="left:222px;top:591px;width:53px;height:23px"><span style="position:absolute;left:1.5px;right:0;text-align:center;bottom:5.5px;">5231</span></div>
<div class="abs cell " style="left:275px;top:591px;width:229px;height:23px;overflow:visible"><span style="position:absolute;left:3.3px;bottom:5.5px;white-space:nowrap;">PUBL OF NOTICES &amp; REPORT</span></div>
<div class="abs cell " style="left:504px;top:591px;width:205.5px;height:23px;overflow:visible"><span style="position:absolute;left:3.3px;bottom:5.5px;white-space:nowrap;">LIBRARY ADMIN/PGMS</span></div>
<div class="abs cell " style="left:709.5px;top:591px;width:80.0px;height:23px"><span style="position:absolute;right:6px;bottom:5.5px;">$0</span></div>
<div class="abs cell " style="left:789.5px;top:591px;width:80.0px;height:23px"><span style="position:absolute;right:6px;bottom:5.5px;">$0</span></div>
<div class="abs cell " style="left:869.5px;top:591px;width:84.0px;height:23px"><span style="position:absolute;right:6px;bottom:5.5px;">$0</span></div>
<div class="abs cell " style="left:953.5px;top:591px;width:80.5px;height:23px"><span style="position:absolute;right:6px;bottom:5.5px;">$1,068</span></div>
<div class="abs cell " style="left:1034px;top:591px;width:81.5px;height:23px"><span style="position:absolute;right:6px;bottom:5.5px;">$1,068</span></div>
<div class="abs cell " style="left:1115.5px;top:591px;width:81.5px;height:23px"><span style="position:absolute;right:6px;bottom:5.5px;">$0</span></div>
<div class="abs cell " style="left:1197px;top:591px;width:69px;height:23px"><span style="position:absolute;right:6px;bottom:5.5px;">$0</span></div>
<div class="abs cell " style="left:1266px;top:591px;width:81.5px;height:23px"><span style="position:absolute;right:6px;bottom:5.5px;">$1,068</span></div>
<div class="abs cell " style="left:1347.5px;top:591px;width:81.5px;height:23px"><span style="position:absolute;right:6px;bottom:5.5px;">$1,068</span></div>
<div class="abs cell " style="left:1429px;top:591px;width:72px;height:23px"><span style="position:absolute;right:6px;bottom:5.5px;">$0</span></div>
<div class="abs cell " style="left:1501px;top:591px;width:73px;height:23px"><span style="position:absolute;right:2.5px;bottom:5.5px;">0.0%</span></div>
<div class="abs cell " style="left:1617px;top:591px;width:84px;height:23px"><span style="position:absolute;right:6px;bottom:5.5px;">$1,068</span></div>
<div class="abs cell " style="left:1701px;top:591px;width:73px;height:23px"><span style="position:absolute;right:6px;bottom:5.5px;">$0</span></div>
<div class="abs cell " style="left:1774px;top:591px;width:72.5px;height:23px"><span style="position:absolute;right:2.5px;bottom:5.5px;">0.0%</span></div>
<svg class="abs" style="left:167px;top:592px" width="6" height="6"><path d="M0 0H5L0 5Z" fill="#1e7a3a"/></svg>
<svg class="abs" style="left:223px;top:592px" width="6" height="6"><path d="M0 0H5L0 5Z" fill="#1e7a3a"/></svg>
<div class="abs cell " style="left:56px;top:614px;width:110px;height:23px;overflow:visible"><span style="position:absolute;left:2.5px;bottom:5.5px;white-space:nowrap;">COMMUNITY SVCS</span></div>
<div class="abs cell " style="left:166px;top:614px;width:56px;height:23px"><span style="position:absolute;left:1.5px;right:0;text-align:center;bottom:5.5px;">16200</span></div>
<div class="abs cell " style="left:222px;top:614px;width:53px;height:23px"><span style="position:absolute;left:1.5px;right:0;text-align:center;bottom:5.5px;">5233</span></div>
<div class="abs cell " style="left:275px;top:614px;width:229px;height:23px;overflow:visible"><span style="position:absolute;left:3.3px;bottom:5.5px;white-space:nowrap;">SUBSCRIPTION-NEWSPAPER</span></div>
<div class="abs cell " style="left:504px;top:614px;width:205.5px;height:23px;overflow:visible"><span style="position:absolute;left:3.3px;bottom:5.5px;white-space:nowrap;">LIBRARY ADMIN/PGMS</span></div>
<div class="abs cell " style="left:709.5px;top:614px;width:80.0px;height:23px"><span style="position:absolute;right:6px;bottom:5.5px;">$23,049</span></div>
<div class="abs cell " style="left:789.5px;top:614px;width:80.0px;height:23px"><span style="position:absolute;right:6px;bottom:5.5px;">$20,687</span></div>
<div class="abs cell " style="left:869.5px;top:614px;width:84.0px;height:23px"><span style="position:absolute;right:6px;bottom:5.5px;">$30,042</span></div>
<div class="abs cell " style="left:953.5px;top:614px;width:80.5px;height:23px"><span style="position:absolute;right:6px;bottom:5.5px;">$31,000</span></div>
<div class="abs cell " style="left:1034px;top:614px;width:81.5px;height:23px"><span style="position:absolute;right:6px;bottom:5.5px;">$31,000</span></div>
<div class="abs cell " style="left:1115.5px;top:614px;width:81.5px;height:23px"><span style="position:absolute;right:6px;bottom:5.5px;">$26,865</span></div>
<div class="abs cell " style="left:1197px;top:614px;width:69px;height:23px"><span style="position:absolute;right:6px;bottom:5.5px;">$3,893</span></div>
<div class="abs cell " style="left:1266px;top:614px;width:81.5px;height:23px"><span style="position:absolute;right:6px;bottom:5.5px;">$242</span></div>
<div class="abs cell " style="left:1347.5px;top:614px;width:81.5px;height:23px"><span style="position:absolute;right:6px;bottom:5.5px;">$31,000</span></div>
<div class="abs cell " style="left:1429px;top:614px;width:72px;height:23px"><span style="position:absolute;right:6px;bottom:5.5px;">$0</span></div>
<div class="abs cell " style="left:1501px;top:614px;width:73px;height:23px"><span style="position:absolute;right:2.5px;bottom:5.5px;">0.0%</span></div>
<div class="abs cell " style="left:1617px;top:614px;width:84px;height:23px"><span style="position:absolute;right:6px;bottom:5.5px;">$31,000</span></div>
<div class="abs cell " style="left:1701px;top:614px;width:73px;height:23px"><span style="position:absolute;right:6px;bottom:5.5px;">$0</span></div>
<div class="abs cell " style="left:1774px;top:614px;width:72.5px;height:23px"><span style="position:absolute;right:2.5px;bottom:5.5px;">0.0%</span></div>
<svg class="abs" style="left:167px;top:615px" width="6" height="6"><path d="M0 0H5L0 5Z" fill="#1e7a3a"/></svg>
<svg class="abs" style="left:223px;top:615px" width="6" height="6"><path d="M0 0H5L0 5Z" fill="#1e7a3a"/></svg>
<div class="abs cell " style="left:56px;top:637px;width:110px;height:23px;overflow:visible"><span style="position:absolute;left:2.5px;bottom:5.5px;white-space:nowrap;">COMMUNITY SVCS</span></div>
<div class="abs cell " style="left:166px;top:637px;width:56px;height:23px"><span style="position:absolute;left:1.5px;right:0;text-align:center;bottom:5.5px;">16200</span></div>
<div class="abs cell " style="left:222px;top:637px;width:53px;height:23px"><span style="position:absolute;left:1.5px;right:0;text-align:center;bottom:5.5px;">5234</span></div>
<div class="abs cell " style="left:275px;top:637px;width:229px;height:23px;overflow:visible"><span style="position:absolute;left:3.3px;bottom:5.5px;white-space:nowrap;">SUBSCRIPTION-TAX,LAW</span></div>
<div class="abs cell " style="left:504px;top:637px;width:205.5px;height:23px;overflow:visible"><span style="position:absolute;left:3.3px;bottom:5.5px;white-space:nowrap;">LIBRARY ADMIN/PGMS</span></div>
<div class="abs cell " style="left:709.5px;top:637px;width:80.0px;height:23px"><span style="position:absolute;right:6px;bottom:5.5px;">$132,554</span></div>
<div class="abs cell " style="left:789.5px;top:637px;width:80.0px;height:23px"><span style="position:absolute;right:6px;bottom:5.5px;">$150,717</span></div>
<div class="abs cell " style="left:869.5px;top:637px;width:84.0px;height:23px"><span style="position:absolute;right:6px;bottom:5.5px;">$156,980</span></div>
<div class="abs cell " style="left:953.5px;top:637px;width:80.5px;height:23px"><span style="position:absolute;right:6px;bottom:5.5px;">$153,800</span></div>
<div class="abs cell " style="left:1034px;top:637px;width:81.5px;height:23px"><span style="position:absolute;right:6px;bottom:5.5px;">$153,800</span></div>
<div class="abs cell " style="left:1115.5px;top:637px;width:81.5px;height:23px"><span style="position:absolute;right:6px;bottom:5.5px;">$139,434</span></div>
<div class="abs cell " style="left:1197px;top:637px;width:69px;height:23px"><span style="position:absolute;right:6px;bottom:5.5px;">$0</span></div>
<div class="abs cell " style="left:1266px;top:637px;width:81.5px;height:23px"><span style="position:absolute;right:6px;bottom:5.5px;">$14,366</span></div>
<div class="abs cell " style="left:1347.5px;top:637px;width:81.5px;height:23px"><span style="position:absolute;right:6px;bottom:5.5px;">$153,800</span></div>
<div class="abs cell " style="left:1429px;top:637px;width:72px;height:23px"><span style="position:absolute;right:6px;bottom:5.5px;">$0</span></div>
<div class="abs cell " style="left:1501px;top:637px;width:73px;height:23px"><span style="position:absolute;right:2.5px;bottom:5.5px;">0.0%</span></div>
<div class="abs cell " style="left:1617px;top:637px;width:84px;height:23px"><span style="position:absolute;right:6px;bottom:5.5px;">$153,800</span></div>
<div class="abs cell " style="left:1701px;top:637px;width:73px;height:23px"><span style="position:absolute;right:6px;bottom:5.5px;">$0</span></div>
<div class="abs cell " style="left:1774px;top:637px;width:72.5px;height:23px"><span style="position:absolute;right:2.5px;bottom:5.5px;">0.0%</span></div>
<svg class="abs" style="left:167px;top:638px" width="6" height="6"><path d="M0 0H5L0 5Z" fill="#1e7a3a"/></svg>
<svg class="abs" style="left:223px;top:638px" width="6" height="6"><path d="M0 0H5L0 5Z" fill="#1e7a3a"/></svg>
<div class="abs cell " style="left:56px;top:660px;width:110px;height:23px;overflow:visible"><span style="position:absolute;left:2.5px;bottom:5.5px;white-space:nowrap;">COMMUNITY SVCS</span></div>
<div class="abs cell " style="left:166px;top:660px;width:56px;height:23px"><span style="position:absolute;left:1.5px;right:0;text-align:center;bottom:5.5px;">16200</span></div>
<div class="abs cell " style="left:222px;top:660px;width:53px;height:23px"><span style="position:absolute;left:1.5px;right:0;text-align:center;bottom:5.5px;">5235</span></div>
<div class="abs cell " style="left:275px;top:660px;width:229px;height:23px;overflow:visible"><span style="position:absolute;left:3.3px;bottom:5.5px;white-space:nowrap;">MEMBERSHIPS &amp; DUES</span></div>
<div class="abs cell " style="left:504px;top:660px;width:205.5px;height:23px;overflow:visible"><span style="position:absolute;left:3.3px;bottom:5.5px;white-space:nowrap;">LIBRARY ADMIN/PGMS</span></div>
<div class="abs cell " style="left:709.5px;top:660px;width:80.0px;height:23px"><span style="position:absolute;right:6px;bottom:5.5px;">$6,541</span></div>
<div class="abs cell " style="left:789.5px;top:660px;width:80.0px;height:23px"><span style="position:absolute;right:6px;bottom:5.5px;">$3,299</span></div>
<div class="abs cell " style="left:869.5px;top:660px;width:84.0px;height:23px"><span style="position:absolute;right:6px;bottom:5.5px;">$3,746</span></div>
<div class="abs cell " style="left:953.5px;top:660px;width:80.5px;height:23px"><span style="position:absolute;right:6px;bottom:5.5px;">$6,996</span></div>
<div class="abs cell " style="left:1034px;top:660px;width:81.5px;height:23px"><span style="position:absolute;right:6px;bottom:5.5px;">$6,996</span></div>
<div class="abs cell " style="left:1115.5px;top:660px;width:81.5px;height:23px"><span style="position:absolute;right:6px;bottom:5.5px;">$3,423</span></div>
<div class="abs cell " style="left:1197px;top:660px;width:69px;height:23px"><span style="position:absolute;right:6px;bottom:5.5px;">$0</span></div>
<div class="abs cell " style="left:1266px;top:660px;width:81.5px;height:23px"><span style="position:absolute;right:6px;bottom:5.5px;">$3,573</span></div>
<div class="abs cell " style="left:1347.5px;top:660px;width:81.5px;height:23px"><span style="position:absolute;right:6px;bottom:5.5px;">$6,996</span></div>
<div class="abs cell " style="left:1429px;top:660px;width:72px;height:23px"><span style="position:absolute;right:6px;bottom:5.5px;">$0</span></div>
<div class="abs cell " style="left:1501px;top:660px;width:73px;height:23px"><span style="position:absolute;right:2.5px;bottom:5.5px;">0.0%</span></div>
<div class="abs cell " style="left:1617px;top:660px;width:84px;height:23px"><span style="position:absolute;right:6px;bottom:5.5px;">$6,996</span></div>
<div class="abs cell " style="left:1701px;top:660px;width:73px;height:23px"><span style="position:absolute;right:6px;bottom:5.5px;">$0</span></div>
<div class="abs cell " style="left:1774px;top:660px;width:72.5px;height:23px"><span style="position:absolute;right:2.5px;bottom:5.5px;">0.0%</span></div>
<svg class="abs" style="left:167px;top:661px" width="6" height="6"><path d="M0 0H5L0 5Z" fill="#1e7a3a"/></svg>
<svg class="abs" style="left:223px;top:661px" width="6" height="6"><path d="M0 0H5L0 5Z" fill="#1e7a3a"/></svg>
<div class="abs cell " style="left:56px;top:683px;width:110px;height:23px;overflow:visible"><span style="position:absolute;left:2.5px;bottom:5.5px;white-space:nowrap;">COMMUNITY SVCS</span></div>
<div class="abs cell " style="left:166px;top:683px;width:56px;height:23px"><span style="position:absolute;left:1.5px;right:0;text-align:center;bottom:5.5px;">16200</span></div>
<div class="abs cell " style="left:222px;top:683px;width:53px;height:23px"><span style="position:absolute;left:1.5px;right:0;text-align:center;bottom:5.5px;">5237</span></div>
<div class="abs cell " style="left:275px;top:683px;width:229px;height:23px;overflow:visible"><span style="position:absolute;left:3.3px;bottom:5.5px;white-space:nowrap;">ADVERTISING</span></div>
<div class="abs cell " style="left:504px;top:683px;width:205.5px;height:23px;overflow:visible"><span style="position:absolute;left:3.3px;bottom:5.5px;white-space:nowrap;">LIBRARY ADMIN/PGMS</span></div>
<div class="abs cell " style="left:709.5px;top:683px;width:80.0px;height:23px"><span style="position:absolute;right:6px;bottom:5.5px;">$133</span></div>
<div class="abs cell " style="left:789.5px;top:683px;width:80.0px;height:23px"><span style="position:absolute;right:6px;bottom:5.5px;">$455</span></div>
<div class="abs cell " style="left:869.5px;top:683px;width:84.0px;height:23px"><span style="position:absolute;right:6px;bottom:5.5px;">$195</span></div>
<div class="abs cell " style="left:953.5px;top:683px;width:80.5px;height:23px"><span style="position:absolute;right:6px;bottom:5.5px;">$1,404</span></div>
<div class="abs cell " style="left:1034px;top:683px;width:81.5px;height:23px"><span style="position:absolute;right:6px;bottom:5.5px;">$1,404</span></div>
<div class="abs cell " style="left:1115.5px;top:683px;width:81.5px;height:23px"><span style="position:absolute;right:6px;bottom:5.5px;">$73</span></div>
<div class="abs cell " style="left:1197px;top:683px;width:69px;height:23px"><span style="position:absolute;right:6px;bottom:5.5px;">$0</span></div>
<div class="abs cell " style="left:1266px;top:683px;width:81.5px;height:23px"><span style="position:absolute;right:6px;bottom:5.5px;">$1,331</span></div>
<div class="abs cell " style="left:1347.5px;top:683px;width:81.5px;height:23px"><span style="position:absolute;right:6px;bottom:5.5px;">$1,404</span></div>
<div class="abs cell " style="left:1429px;top:683px;width:72px;height:23px"><span style="position:absolute;right:6px;bottom:5.5px;">$0</span></div>
<div class="abs cell " style="left:1501px;top:683px;width:73px;height:23px"><span style="position:absolute;right:2.5px;bottom:5.5px;">0.0%</span></div>
<div class="abs cell " style="left:1617px;top:683px;width:84px;height:23px"><span style="position:absolute;right:6px;bottom:5.5px;">$1,404</span></div>
<div class="abs cell " style="left:1701px;top:683px;width:73px;height:23px"><span style="position:absolute;right:6px;bottom:5.5px;">$0</span></div>
<div class="abs cell " style="left:1774px;top:683px;width:72.5px;height:23px"><span style="position:absolute;right:2.5px;bottom:5.5px;">0.0%</span></div>
<svg class="abs" style="left:167px;top:684px" width="6" height="6"><path d="M0 0H5L0 5Z" fill="#1e7a3a"/></svg>
<svg class="abs" style="left:223px;top:684px" width="6" height="6"><path d="M0 0H5L0 5Z" fill="#1e7a3a"/></svg>
<div class="abs cell " style="left:56px;top:706px;width:110px;height:23px;overflow:visible"><span style="position:absolute;left:2.5px;bottom:5.5px;white-space:nowrap;">COMMUNITY SVCS</span></div>
<div class="abs cell " style="left:166px;top:706px;width:56px;height:23px"><span style="position:absolute;left:1.5px;right:0;text-align:center;bottom:5.5px;">16200</span></div>
<div class="abs cell " style="left:222px;top:706px;width:53px;height:23px"><span style="position:absolute;left:1.5px;right:0;text-align:center;bottom:5.5px;">5241</span></div>
<div class="abs cell " style="left:275px;top:706px;width:229px;height:23px;overflow:visible"><span style="position:absolute;left:3.3px;bottom:5.5px;white-space:nowrap;">ELECTRIC</span></div>
<div class="abs cell " style="left:504px;top:706px;width:205.5px;height:23px;overflow:visible"><span style="position:absolute;left:3.3px;bottom:5.5px;white-space:nowrap;">LIBRARY ADMIN/PGMS</span></div>
<div class="abs cell " style="left:709.5px;top:706px;width:80.0px;height:23px"><span style="position:absolute;right:6px;bottom:5.5px;">$0</span></div>
<div class="abs cell " style="left:789.5px;top:706px;width:80.0px;height:23px"><span style="position:absolute;right:6px;bottom:5.5px;">$0</span></div>
<div class="abs cell " style="left:869.5px;top:706px;width:84.0px;height:23px"><span style="position:absolute;right:6px;bottom:5.5px;">$45</span></div>
<div class="abs cell " style="left:953.5px;top:706px;width:80.5px;height:23px"><span style="position:absolute;right:6px;bottom:5.5px;">$0</span></div>
<div class="abs cell " style="left:1034px;top:706px;width:81.5px;height:23px"><span style="position:absolute;right:6px;bottom:5.5px;">$0</span></div>
<div class="abs cell " style="left:1115.5px;top:706px;width:81.5px;height:23px"><span style="position:absolute;right:6px;bottom:5.5px;">$0</span></div>
<div class="abs cell " style="left:1197px;top:706px;width:69px;height:23px"><span style="position:absolute;right:6px;bottom:5.5px;">$0</span></div>
<div class="abs cell " style="left:1266px;top:706px;width:81.5px;height:23px"><span style="position:absolute;right:6px;bottom:5.5px;">$0</span></div>
<div class="abs cell " style="left:1347.5px;top:706px;width:81.5px;height:23px"><span style="position:absolute;right:6px;bottom:5.5px;">$0</span></div>
<div class="abs cell " style="left:1429px;top:706px;width:72px;height:23px"><span style="position:absolute;right:6px;bottom:5.5px;">$0</span></div>
<div class="abs cell " style="left:1501px;top:706px;width:73px;height:23px"><span style="position:absolute;right:2.5px;bottom:5.5px;">0</span></div>
<div class="abs cell " style="left:1617px;top:706px;width:84px;height:23px"><span style="position:absolute;right:6px;bottom:5.5px;">$0</span></div>
<div class="abs cell " style="left:1701px;top:706px;width:73px;height:23px"><span style="position:absolute;right:6px;bottom:5.5px;">$0</span></div>
<div class="abs cell " style="left:1774px;top:706px;width:72.5px;height:23px"><span style="position:absolute;right:2.5px;bottom:5.5px;">0</span></div>
<svg class="abs" style="left:167px;top:707px" width="6" height="6"><path d="M0 0H5L0 5Z" fill="#1e7a3a"/></svg>
<svg class="abs" style="left:223px;top:707px" width="6" height="6"><path d="M0 0H5L0 5Z" fill="#1e7a3a"/></svg>
<div class="abs cell " style="left:56px;top:729px;width:110px;height:23px;overflow:visible"><span style="position:absolute;left:2.5px;bottom:5.5px;white-space:nowrap;">COMMUNITY SVCS</span></div>
<div class="abs cell " style="left:166px;top:729px;width:56px;height:23px"><span style="position:absolute;left:1.5px;right:0;text-align:center;bottom:5.5px;">16200</span></div>
<div class="abs cell " style="left:222px;top:729px;width:53px;height:23px"><span style="position:absolute;left:1.5px;right:0;text-align:center;bottom:5.5px;">5245</span></div>
<div class="abs cell " style="left:275px;top:729px;width:229px;height:23px;overflow:visible"><span style="position:absolute;left:3.3px;bottom:5.5px;white-space:nowrap;">TELEPHONE</span></div>
<div class="abs cell " style="left:504px;top:729px;width:205.5px;height:23px;overflow:visible"><span style="position:absolute;left:3.3px;bottom:5.5px;white-space:nowrap;">LIBRARY ADMIN/PGMS</span></div>
<div class="abs cell " style="left:709.5px;top:729px;width:80.0px;height:23px"><span style="position:absolute;right:6px;bottom:5.5px;">$51,494</span></div>
<div class="abs cell " style="left:789.5px;top:729px;width:80.0px;height:23px"><span style="position:absolute;right:6px;bottom:5.5px;">$50,790</span></div>
<div class="abs cell " style="left:869.5px;top:729px;width:84.0px;height:23px"><span style="position:absolute;right:6px;bottom:5.5px;">$53,667</span></div>
<div class="abs cell " style="left:953.5px;top:729px;width:80.5px;height:23px"><span style="position:absolute;right:6px;bottom:5.5px;">$50,004</span></div>
<div class="abs cell " style="left:1034px;top:729px;width:81.5px;height:23px"><span style="position:absolute;right:6px;bottom:5.5px;">$50,004</span></div>
<div class="abs cell " style="left:1115.5px;top:729px;width:81.5px;height:23px"><span style="position:absolute;right:6px;bottom:5.5px;">$19,901</span></div>
<div class="abs cell " style="left:1197px;top:729px;width:69px;height:23px"><span style="position:absolute;right:6px;bottom:5.5px;">$4,611</span></div>
<div class="abs cell " style="left:1266px;top:729px;width:81.5px;height:23px"><span style="position:absolute;right:6px;bottom:5.5px;">$25,492</span></div>
<div class="abs cell " style="left:1347.5px;top:729px;width:81.5px;height:23px"><span style="position:absolute;right:6px;bottom:5.5px;">$50,004</span></div>
<div class="abs cell " style="left:1429px;top:729px;width:72px;height:23px"><span style="position:absolute;right:6px;bottom:5.5px;">$0</span></div>
<div class="abs cell " style="left:1501px;top:729px;width:73px;height:23px"><span style="position:absolute;right:2.5px;bottom:5.5px;">0.0%</span></div>
<div class="abs cell " style="left:1617px;top:729px;width:84px;height:23px"><span style="position:absolute;right:6px;bottom:5.5px;">$50,004</span></div>
<div class="abs cell " style="left:1701px;top:729px;width:73px;height:23px"><span style="position:absolute;right:6px;bottom:5.5px;">$0</span></div>
<div class="abs cell " style="left:1774px;top:729px;width:72.5px;height:23px"><span style="position:absolute;right:2.5px;bottom:5.5px;">0.0%</span></div>
<svg class="abs" style="left:167px;top:730px" width="6" height="6"><path d="M0 0H5L0 5Z" fill="#1e7a3a"/></svg>
<svg class="abs" style="left:223px;top:730px" width="6" height="6"><path d="M0 0H5L0 5Z" fill="#1e7a3a"/></svg>
<div class="abs cell " style="left:56px;top:752px;width:110px;height:23px;overflow:visible"><span style="position:absolute;left:2.5px;bottom:5.5px;white-space:nowrap;">COMMUNITY SVCS</span></div>
<div class="abs cell " style="left:166px;top:752px;width:56px;height:23px"><span style="position:absolute;left:1.5px;right:0;text-align:center;bottom:5.5px;">16200</span></div>
<div class="abs cell " style="left:222px;top:752px;width:53px;height:23px"><span style="position:absolute;left:1.5px;right:0;text-align:center;bottom:5.5px;">5247</span></div>
<div class="abs cell " style="left:275px;top:752px;width:229px;height:23px;overflow:visible"><span style="position:absolute;left:3.3px;bottom:5.5px;white-space:nowrap;">OTHER UTILITY SERVICES</span></div>
<div class="abs cell " style="left:504px;top:752px;width:205.5px;height:23px;overflow:visible"><span style="position:absolute;left:3.3px;bottom:5.5px;white-space:nowrap;">LIBRARY ADMIN/PGMS</span></div>
<div class="abs cell " style="left:709.5px;top:752px;width:80.0px;height:23px"><span style="position:absolute;right:6px;bottom:5.5px;">$136</span></div>
<div class="abs cell " style="left:789.5px;top:752px;width:80.0px;height:23px"><span style="position:absolute;right:6px;bottom:5.5px;">$148</span></div>
<div class="abs cell " style="left:869.5px;top:752px;width:84.0px;height:23px"><span style="position:absolute;right:6px;bottom:5.5px;">$182</span></div>
<div class="abs cell " style="left:953.5px;top:752px;width:80.5px;height:23px"><span style="position:absolute;right:6px;bottom:5.5px;">$336</span></div>
<div class="abs cell " style="left:1034px;top:752px;width:81.5px;height:23px"><span style="position:absolute;right:6px;bottom:5.5px;">$336</span></div>
<div class="abs cell " style="left:1115.5px;top:752px;width:81.5px;height:23px"><span style="position:absolute;right:6px;bottom:5.5px;">$108</span></div>
<div class="abs cell " style="left:1197px;top:752px;width:69px;height:23px"><span style="position:absolute;right:6px;bottom:5.5px;">$228</span></div>
<div class="abs cell " style="left:1266px;top:752px;width:81.5px;height:23px"><span style="position:absolute;right:6px;bottom:5.5px;">$0</span></div>
<div class="abs cell " style="left:1347.5px;top:752px;width:81.5px;height:23px"><span style="position:absolute;right:6px;bottom:5.5px;">$336</span></div>
<div class="abs cell " style="left:1429px;top:752px;width:72px;height:23px"><span style="position:absolute;right:6px;bottom:5.5px;">$0</span></div>
<div class="abs cell " style="left:1501px;top:752px;width:73px;height:23px"><span style="position:absolute;right:2.5px;bottom:5.5px;">0.0%</span></div>
<div class="abs cell " style="left:1617px;top:752px;width:84px;height:23px"><span style="position:absolute;right:6px;bottom:5.5px;">$336</span></div>
<div class="abs cell " style="left:1701px;top:752px;width:73px;height:23px"><span style="position:absolute;right:6px;bottom:5.5px;">$0</span></div>
<div class="abs cell " style="left:1774px;top:752px;width:72.5px;height:23px"><span style="position:absolute;right:2.5px;bottom:5.5px;">0.0%</span></div>
<svg class="abs" style="left:167px;top:753px" width="6" height="6"><path d="M0 0H5L0 5Z" fill="#1e7a3a"/></svg>
<svg class="abs" style="left:223px;top:753px" width="6" height="6"><path d="M0 0H5L0 5Z" fill="#1e7a3a"/></svg>
<div class="abs cell " style="left:56px;top:775px;width:110px;height:23px;overflow:visible"><span style="position:absolute;left:2.5px;bottom:5.5px;white-space:nowrap;">COMMUNITY SVCS</span></div>
<div class="abs cell " style="left:166px;top:775px;width:56px;height:23px"><span style="position:absolute;left:1.5px;right:0;text-align:center;bottom:5.5px;">16200</span></div>
<div class="abs cell " style="left:222px;top:775px;width:53px;height:23px"><span style="position:absolute;left:1.5px;right:0;text-align:center;bottom:5.5px;">5253</span></div>
<div class="abs cell " style="left:275px;top:775px;width:229px;height:23px;overflow:visible"><span style="position:absolute;left:3.3px;bottom:5.5px;white-space:nowrap;">ACCOUNTING,AUDITING SERV</span></div>
<div class="abs cell " style="left:504px;top:775px;width:205.5px;height:23px;overflow:visible"><span style="position:absolute;left:3.3px;bottom:5.5px;white-space:nowrap;">LIBRARY ADMIN/PGMS</span></div>
<div class="abs cell " style="left:709.5px;top:775px;width:80.0px;height:23px"><span style="position:absolute;right:6px;bottom:5.5px;">$0</span></div>
<div class="abs cell " style="left:789.5px;top:775px;width:80.0px;height:23px"><span style="position:absolute;right:6px;bottom:5.5px;">$0</span></div>
<div class="abs cell " style="left:869.5px;top:775px;width:84.0px;height:23px"><span style="position:absolute;right:6px;bottom:5.5px;">$0</span></div>
<div class="abs cell " style="left:953.5px;top:775px;width:80.5px;height:23px"><span style="position:absolute;right:6px;bottom:5.5px;">$444</span></div>
<div class="abs cell " style="left:1034px;top:775px;width:81.5px;height:23px"><span style="position:absolute;right:6px;bottom:5.5px;">$444</span></div>
<div class="abs cell " style="left:1115.5px;top:775px;width:81.5px;height:23px"><span style="position:absolute;right:6px;bottom:5.5px;">$0</span></div>
<div class="abs cell " style="left:1197px;top:775px;width:69px;height:23px"><span style="position:absolute;right:6px;bottom:5.5px;">$0</span></div>
<div class="abs cell " style="left:1266px;top:775px;width:81.5px;height:23px"><span style="position:absolute;right:6px;bottom:5.5px;">$444</span></div>
<div class="abs cell " style="left:1347.5px;top:775px;width:81.5px;height:23px"><span style="position:absolute;right:6px;bottom:5.5px;">$444</span></div>
<div class="abs cell " style="left:1429px;top:775px;width:72px;height:23px"><span style="position:absolute;right:6px;bottom:5.5px;">$0</span></div>
<div class="abs cell " style="left:1501px;top:775px;width:73px;height:23px"><span style="position:absolute;right:2.5px;bottom:5.5px;">0.0%</span></div>
<div class="abs cell " style="left:1617px;top:775px;width:84px;height:23px"><span style="position:absolute;right:6px;bottom:5.5px;">$444</span></div>
<div class="abs cell " style="left:1701px;top:775px;width:73px;height:23px"><span style="position:absolute;right:6px;bottom:5.5px;">$0</span></div>
<div class="abs cell " style="left:1774px;top:775px;width:72.5px;height:23px"><span style="position:absolute;right:2.5px;bottom:5.5px;">0.0%</span></div>
<svg class="abs" style="left:167px;top:776px" width="6" height="6"><path d="M0 0H5L0 5Z" fill="#1e7a3a"/></svg>
<svg class="abs" style="left:223px;top:776px" width="6" height="6"><path d="M0 0H5L0 5Z" fill="#1e7a3a"/></svg>
<div class="abs cell " style="left:56px;top:798px;width:110px;height:23px;overflow:visible"><span style="position:absolute;left:2.5px;bottom:5.5px;white-space:nowrap;">COMMUNITY SVCS</span></div>
<div class="abs cell " style="left:166px;top:798px;width:56px;height:23px"><span style="position:absolute;left:1.5px;right:0;text-align:center;bottom:5.5px;">16200</span></div>
<div class="abs cell " style="left:222px;top:798px;width:53px;height:23px"><span style="position:absolute;left:1.5px;right:0;text-align:center;bottom:5.5px;">5255</span></div>
<div class="abs cell " style="left:275px;top:798px;width:229px;height:23px;overflow:visible"><span style="position:absolute;left:3.3px;bottom:5.5px;white-space:nowrap;">IT SERVICES</span></div>
<div class="abs cell " style="left:504px;top:798px;width:205.5px;height:23px;overflow:visible"><span style="position:absolute;left:3.3px;bottom:5.5px;white-space:nowrap;">LIBRARY ADMIN/PGMS</span></div>
<div class="abs cell " style="left:709.5px;top:798px;width:80.0px;height:23px"><span style="position:absolute;right:6px;bottom:5.5px;">$6,925</span></div>
<div class="abs cell " style="left:789.5px;top:798px;width:80.0px;height:23px"><span style="position:absolute;right:6px;bottom:5.5px;">$10,362</span></div>
<div class="abs cell " style="left:869.5px;top:798px;width:84.0px;height:23px"><span style="position:absolute;right:6px;bottom:5.5px;">$10,241</span></div>
<div class="abs cell " style="left:953.5px;top:798px;width:80.5px;height:23px"><span style="position:absolute;right:6px;bottom:5.5px;">$10,000</span></div>
<div class="abs cell " style="left:1034px;top:798px;width:81.5px;height:23px"><span style="position:absolute;right:6px;bottom:5.5px;">$10,000</span></div>
<div class="abs cell " style="left:1115.5px;top:798px;width:81.5px;height:23px"><span style="position:absolute;right:6px;bottom:5.5px;">$1,902</span></div>
<div class="abs cell " style="left:1197px;top:798px;width:69px;height:23px"><span style="position:absolute;right:6px;bottom:5.5px;">$900</span></div>
<div class="abs cell " style="left:1266px;top:798px;width:81.5px;height:23px"><span style="position:absolute;right:6px;bottom:5.5px;">$7,198</span></div>
<div class="abs cell " style="left:1347.5px;top:798px;width:81.5px;height:23px"><span style="position:absolute;right:6px;bottom:5.5px;">$10,000</span></div>
<div class="abs cell " style="left:1429px;top:798px;width:72px;height:23px"><span style="position:absolute;right:6px;bottom:5.5px;">$0</span></div>
<div class="abs cell " style="left:1501px;top:798px;width:73px;height:23px"><span style="position:absolute;right:2.5px;bottom:5.5px;">0.0%</span></div>
<div class="abs cell " style="left:1617px;top:798px;width:84px;height:23px"><span style="position:absolute;right:6px;bottom:5.5px;">$10,000</span></div>
<div class="abs cell " style="left:1701px;top:798px;width:73px;height:23px"><span style="position:absolute;right:6px;bottom:5.5px;">$0</span></div>
<div class="abs cell " style="left:1774px;top:798px;width:72.5px;height:23px"><span style="position:absolute;right:2.5px;bottom:5.5px;">0.0%</span></div>
<svg class="abs" style="left:167px;top:799px" width="6" height="6"><path d="M0 0H5L0 5Z" fill="#1e7a3a"/></svg>
<svg class="abs" style="left:223px;top:799px" width="6" height="6"><path d="M0 0H5L0 5Z" fill="#1e7a3a"/></svg>
<div class="abs cell " style="left:56px;top:821px;width:110px;height:23px;overflow:visible"><span style="position:absolute;left:2.5px;bottom:5.5px;white-space:nowrap;">COMMUNITY SVCS</span></div>
<div class="abs cell " style="left:166px;top:821px;width:56px;height:23px"><span style="position:absolute;left:1.5px;right:0;text-align:center;bottom:5.5px;">16200</span></div>
<div class="abs cell " style="left:222px;top:821px;width:53px;height:23px"><span style="position:absolute;left:1.5px;right:0;text-align:center;bottom:5.5px;">5258</span></div>
<div class="abs cell " style="left:275px;top:821px;width:229px;height:23px;overflow:visible"><span style="position:absolute;left:3.3px;bottom:5.5px;white-space:nowrap;">OTHER PROFESSIONAL SERVS</span></div>
<div class="abs cell " style="left:504px;top:821px;width:205.5px;height:23px;overflow:visible"><span style="position:absolute;left:3.3px;bottom:5.5px;white-space:nowrap;">LIBRARY ADMIN/PGMS</span></div>
<div class="abs cell " style="left:709.5px;top:821px;width:80.0px;height:23px"><span style="position:absolute;right:6px;bottom:5.5px;">$51,878</span></div>
<div class="abs cell " style="left:789.5px;top:821px;width:80.0px;height:23px"><span style="position:absolute;right:6px;bottom:5.5px;">$49,740</span></div>
<div class="abs cell " style="left:869.5px;top:821px;width:84.0px;height:23px"><span style="position:absolute;right:6px;bottom:5.5px;">$52,277</span></div>
<div class="abs cell " style="left:953.5px;top:821px;width:80.5px;height:23px"><span style="position:absolute;right:6px;bottom:5.5px;">$54,276</span></div>
<div class="abs cell " style="left:1034px;top:821px;width:81.5px;height:23px"><span style="position:absolute;right:6px;bottom:5.5px;">$57,276</span></div>
<div class="abs cell " style="left:1115.5px;top:821px;width:81.5px;height:23px"><span style="position:absolute;right:6px;bottom:5.5px;">$42,962</span></div>
<div class="abs cell " style="left:1197px;top:821px;width:69px;height:23px"><span style="position:absolute;right:6px;bottom:5.5px;">$2,993</span></div>
<div class="abs cell " style="left:1266px;top:821px;width:81.5px;height:23px"><span style="position:absolute;right:6px;bottom:5.5px;">$11,321</span></div>
<div class="abs cell " style="left:1347.5px;top:821px;width:81.5px;height:23px"><span style="position:absolute;right:6px;bottom:5.5px;">$74,276</span></div>
<div class="abs cell " style="left:1429px;top:821px;width:72px;height:23px"><span style="position:absolute;right:6px;bottom:5.5px;">$17,000</span></div>
<div class="abs cell " style="left:1501px;top:821px;width:73px;height:23px"><span style="position:absolute;right:2.5px;bottom:5.5px;">29.7%</span></div>
<div class="abs cell " style="left:1617px;top:821px;width:84px;height:23px"><span style="position:absolute;right:6px;bottom:5.5px;">$74,276</span></div>
<div class="abs cell " style="left:1701px;top:821px;width:73px;height:23px"><span style="position:absolute;right:6px;bottom:5.5px;">$17,000</span></div>
<div class="abs cell " style="left:1774px;top:821px;width:72.5px;height:23px"><span style="position:absolute;right:2.5px;bottom:5.5px;">29.7%</span></div>
<svg class="abs" style="left:167px;top:822px" width="6" height="6"><path d="M0 0H5L0 5Z" fill="#1e7a3a"/></svg>
<svg class="abs" style="left:223px;top:822px" width="6" height="6"><path d="M0 0H5L0 5Z" fill="#1e7a3a"/></svg>
<div class="abs cell " style="left:56px;top:844px;width:110px;height:23px;overflow:visible"><span style="position:absolute;left:2.5px;bottom:5.5px;white-space:nowrap;">COMMUNITY SVCS</span></div>
<div class="abs cell " style="left:166px;top:844px;width:56px;height:23px"><span style="position:absolute;left:1.5px;right:0;text-align:center;bottom:5.5px;">16200</span></div>
<div class="abs cell " style="left:222px;top:844px;width:53px;height:23px"><span style="position:absolute;left:1.5px;right:0;text-align:center;bottom:5.5px;">5262</span></div>
<div class="abs cell " style="left:275px;top:844px;width:229px;height:23px;overflow:visible"><span style="position:absolute;left:3.3px;bottom:5.5px;white-space:nowrap;">OTHER MACHINERY-EQUIP</span></div>
<div class="abs cell " style="left:504px;top:844px;width:205.5px;height:23px;overflow:visible"><span style="position:absolute;left:3.3px;bottom:5.5px;white-space:nowrap;">LIBRARY ADMIN/PGMS</span></div>
<div class="abs cell " style="left:709.5px;top:844px;width:80.0px;height:23px"><span style="position:absolute;right:6px;bottom:5.5px;">$0</span></div>
<div class="abs cell " style="left:789.5px;top:844px;width:80.0px;height:23px"><span style="position:absolute;right:6px;bottom:5.5px;">$0</span></div>
<div class="abs cell " style="left:869.5px;top:844px;width:84.0px;height:23px"><span style="position:absolute;right:6px;bottom:5.5px;">$0</span></div>
<div class="abs cell " style="left:953.5px;top:844px;width:80.5px;height:23px"><span style="position:absolute;right:6px;bottom:5.5px;">$0</span></div>
<div class="abs cell " style="left:1034px;top:844px;width:81.5px;height:23px"><span style="position:absolute;right:6px;bottom:5.5px;">$0</span></div>
<div class="abs cell " style="left:1115.5px;top:844px;width:81.5px;height:23px"><span style="position:absolute;right:6px;bottom:5.5px;">$0</span></div>
<div class="abs cell " style="left:1197px;top:844px;width:69px;height:23px"><span style="position:absolute;right:6px;bottom:5.5px;">$0</span></div>
<div class="abs cell " style="left:1266px;top:844px;width:81.5px;height:23px"><span style="position:absolute;right:6px;bottom:5.5px;">$0</span></div>
<div class="abs cell " style="left:1347.5px;top:844px;width:81.5px;height:23px"><span style="position:absolute;right:6px;bottom:5.5px;">$0</span></div>
<div class="abs cell " style="left:1429px;top:844px;width:72px;height:23px"><span style="position:absolute;right:6px;bottom:5.5px;">$0</span></div>
<div class="abs cell " style="left:1501px;top:844px;width:73px;height:23px"><span style="position:absolute;right:2.5px;bottom:5.5px;">0</span></div>
<div class="abs cell " style="left:1617px;top:844px;width:84px;height:23px"><span style="position:absolute;right:6px;bottom:5.5px;">$0</span></div>
<div class="abs cell " style="left:1701px;top:844px;width:73px;height:23px"><span style="position:absolute;right:6px;bottom:5.5px;">$0</span></div>
<div class="abs cell " style="left:1774px;top:844px;width:72.5px;height:23px"><span style="position:absolute;right:2.5px;bottom:5.5px;">0</span></div>
<svg class="abs" style="left:167px;top:845px" width="6" height="6"><path d="M0 0H5L0 5Z" fill="#1e7a3a"/></svg>
<svg class="abs" style="left:223px;top:845px" width="6" height="6"><path d="M0 0H5L0 5Z" fill="#1e7a3a"/></svg>
<div class="abs cell " style="left:56px;top:867px;width:110px;height:23px;overflow:visible"><span style="position:absolute;left:2.5px;bottom:5.5px;white-space:nowrap;">COMMUNITY SVCS</span></div>
<div class="abs cell " style="left:166px;top:867px;width:56px;height:23px"><span style="position:absolute;left:1.5px;right:0;text-align:center;bottom:5.5px;">16200</span></div>
<div class="abs cell " style="left:222px;top:867px;width:53px;height:23px"><span style="position:absolute;left:1.5px;right:0;text-align:center;bottom:5.5px;">5263</span></div>
<div class="abs cell " style="left:275px;top:867px;width:229px;height:23px;overflow:visible"><span style="position:absolute;left:3.3px;bottom:5.5px;white-space:nowrap;">FURNITUR,OFFICE MACH REP&amp;MAINT</span></div>
<div class="abs cell " style="left:504px;top:867px;width:205.5px;height:23px;overflow:visible"><span style="position:absolute;left:3.3px;bottom:5.5px;white-space:nowrap;">LIBRARY ADMIN/PGMS</span></div>
<div class="abs cell " style="left:709.5px;top:867px;width:80.0px;height:23px"><span style="position:absolute;right:6px;bottom:5.5px;">$5,504</span></div>
<div class="abs cell " style="left:789.5px;top:867px;width:80.0px;height:23px"><span style="position:absolute;right:6px;bottom:5.5px;">$9,160</span></div>
<div class="abs cell " style="left:869.5px;top:867px;width:84.0px;height:23px"><span style="position:absolute;right:6px;bottom:5.5px;">$3,513</span></div>
<div class="abs cell " style="left:953.5px;top:867px;width:80.5px;height:23px"><span style="position:absolute;right:6px;bottom:5.5px;">$5,160</span></div>
<div class="abs cell " style="left:1034px;top:867px;width:81.5px;height:23px"><span style="position:absolute;right:6px;bottom:5.5px;">$5,160</span></div>
<div class="abs cell " style="left:1115.5px;top:867px;width:81.5px;height:23px"><span style="position:absolute;right:6px;bottom:5.5px;">$2,769</span></div>
<div class="abs cell " style="left:1197px;top:867px;width:69px;height:23px"><span style="position:absolute;right:6px;bottom:5.5px;">$0</span></div>
<div class="abs cell " style="left:1266px;top:867px;width:81.5px;height:23px"><span style="position:absolute;right:6px;bottom:5.5px;">$2,391</span></div>
<div class="abs cell " style="left:1347.5px;top:867px;width:81.5px;height:23px"><span style="position:absolute;right:6px;bottom:5.5px;">$5,160</span></div>
<div class="abs cell " style="left:1429px;top:867px;width:72px;height:23px"><span style="position:absolute;right:6px;bottom:5.5px;">$0</span></div>
<div class="abs cell " style="left:1501px;top:867px;width:73px;height:23px"><span style="position:absolute;right:2.5px;bottom:5.5px;">0.0%</span></div>
<div class="abs cell " style="left:1617px;top:867px;width:84px;height:23px"><span style="position:absolute;right:6px;bottom:5.5px;">$5,160</span></div>
<div class="abs cell " style="left:1701px;top:867px;width:73px;height:23px"><span style="position:absolute;right:6px;bottom:5.5px;">$0</span></div>
<div class="abs cell " style="left:1774px;top:867px;width:72.5px;height:23px"><span style="position:absolute;right:2.5px;bottom:5.5px;">0.0%</span></div>
<svg class="abs" style="left:167px;top:868px" width="6" height="6"><path d="M0 0H5L0 5Z" fill="#1e7a3a"/></svg>
<svg class="abs" style="left:223px;top:868px" width="6" height="6"><path d="M0 0H5L0 5Z" fill="#1e7a3a"/></svg>
<div class="abs cell " style="left:56px;top:890px;width:110px;height:23px;overflow:visible"><span style="position:absolute;left:2.5px;bottom:5.5px;white-space:nowrap;">COMMUNITY SVCS</span></div>
<div class="abs cell " style="left:166px;top:890px;width:56px;height:23px"><span style="position:absolute;left:1.5px;right:0;text-align:center;bottom:5.5px;">16200</span></div>
<div class="abs cell " style="left:222px;top:890px;width:53px;height:23px"><span style="position:absolute;left:1.5px;right:0;text-align:center;bottom:5.5px;">5265</span></div>
<div class="abs cell " style="left:275px;top:890px;width:229px;height:23px;overflow:visible"><span style="position:absolute;left:3.3px;bottom:5.5px;white-space:nowrap;">GROUNDS&amp;OUTDOOR COURTS</span></div>
<div class="abs cell " style="left:504px;top:890px;width:205.5px;height:23px;overflow:visible"><span style="position:absolute;left:3.3px;bottom:5.5px;white-space:nowrap;">LIBRARY ADMIN/PGMS</span></div>
<div class="abs cell " style="left:709.5px;top:890px;width:80.0px;height:23px"><span style="position:absolute;right:6px;bottom:5.5px;">$1,121</span></div>
<div class="abs cell " style="left:789.5px;top:890px;width:80.0px;height:23px"><span style="position:absolute;right:6px;bottom:5.5px;">$12,600</span></div>
<div class="abs cell " style="left:869.5px;top:890px;width:84.0px;height:23px"><span style="position:absolute;right:6px;bottom:5.5px;">$28,960</span></div>
<div class="abs cell " style="left:953.5px;top:890px;width:80.5px;height:23px"><span style="position:absolute;right:6px;bottom:5.5px;">$37,400</span></div>
<div class="abs cell " style="left:1034px;top:890px;width:81.5px;height:23px"><span style="position:absolute;right:6px;bottom:5.5px;">$36,100</span></div>
<div class="abs cell " style="left:1115.5px;top:890px;width:81.5px;height:23px"><span style="position:absolute;right:6px;bottom:5.5px;">$15,915</span></div>
<div class="abs cell " style="left:1197px;top:890px;width:69px;height:23px"><span style="position:absolute;right:6px;bottom:5.5px;">$5,085</span></div>
<div class="abs cell " style="left:1266px;top:890px;width:81.5px;height:23px"><span style="position:absolute;right:6px;bottom:5.5px;">$15,100</span></div>
<div class="abs cell " style="left:1347.5px;top:890px;width:81.5px;height:23px"><span style="position:absolute;right:6px;bottom:5.5px;">$37,400</span></div>
<div class="abs cell " style="left:1429px;top:890px;width:72px;height:23px"><span style="position:absolute;right:6px;bottom:5.5px;">$1,300</span></div>
<div class="abs cell " style="left:1501px;top:890px;width:73px;height:23px"><span style="position:absolute;right:2.5px;bottom:5.5px;">3.6%</span></div>
<div class="abs cell " style="left:1617px;top:890px;width:84px;height:23px"><span style="position:absolute;right:6px;bottom:5.5px;">$37,400</span></div>
<div class="abs cell " style="left:1701px;top:890px;width:73px;height:23px"><span style="position:absolute;right:6px;bottom:5.5px;">$1,300</span></div>
<div class="abs cell " style="left:1774px;top:890px;width:72.5px;height:23px"><span style="position:absolute;right:2.5px;bottom:5.5px;">3.6%</span></div>
<svg class="abs" style="left:167px;top:891px" width="6" height="6"><path d="M0 0H5L0 5Z" fill="#1e7a3a"/></svg>
<svg class="abs" style="left:223px;top:891px" width="6" height="6"><path d="M0 0H5L0 5Z" fill="#1e7a3a"/></svg>
<div class="abs cell " style="left:56px;top:913px;width:110px;height:23px;overflow:visible"><span style="position:absolute;left:2.5px;bottom:5.5px;white-space:nowrap;">COMMUNITY SVCS</span></div>
<div class="abs cell " style="left:166px;top:913px;width:56px;height:23px"><span style="position:absolute;left:1.5px;right:0;text-align:center;bottom:5.5px;">16200</span></div>
<div class="abs cell " style="left:222px;top:913px;width:53px;height:23px"><span style="position:absolute;left:1.5px;right:0;text-align:center;bottom:5.5px;">5269</span></div>
<div class="abs cell " style="left:275px;top:913px;width:229px;height:23px;overflow:visible"><span style="position:absolute;left:3.3px;bottom:5.5px;white-space:nowrap;">OTHER REPAIR-MAINTENANCE</span></div>
<div class="abs cell " style="left:504px;top:913px;width:205.5px;height:23px;overflow:visible"><span style="position:absolute;left:3.3px;bottom:5.5px;white-space:nowrap;">LIBRARY ADMIN/PGMS</span></div>
<div class="abs cell " style="left:709.5px;top:913px;width:80.0px;height:23px"><span style="position:absolute;right:6px;bottom:5.5px;">$1,908</span></div>
<div class="abs cell " style="left:789.5px;top:913px;width:80.0px;height:23px"><span style="position:absolute;right:6px;bottom:5.5px;">$28</span></div>
<div class="abs cell " style="left:869.5px;top:913px;width:84.0px;height:23px"><span style="position:absolute;right:6px;bottom:5.5px;">$3,000</span></div>
<div class="abs cell " style="left:953.5px;top:913px;width:80.5px;height:23px"><span style="position:absolute;right:6px;bottom:5.5px;">$3,000</span></div>
<div class="abs cell " style="left:1034px;top:913px;width:81.5px;height:23px"><span style="position:absolute;right:6px;bottom:5.5px;">$3,000</span></div>
<div class="abs cell " style="left:1115.5px;top:913px;width:81.5px;height:23px"><span style="position:absolute;right:6px;bottom:5.5px;">$0</span></div>
<div class="abs cell " style="left:1197px;top:913px;width:69px;height:23px"><span style="position:absolute;right:6px;bottom:5.5px;">$0</span></div>
<div class="abs cell " style="left:1266px;top:913px;width:81.5px;height:23px"><span style="position:absolute;right:6px;bottom:5.5px;">$3,000</span></div>
<div class="abs cell " style="left:1347.5px;top:913px;width:81.5px;height:23px"><span style="position:absolute;right:6px;bottom:5.5px;">$3,000</span></div>
<div class="abs cell " style="left:1429px;top:913px;width:72px;height:23px"><span style="position:absolute;right:6px;bottom:5.5px;">$0</span></div>
<div class="abs cell " style="left:1501px;top:913px;width:73px;height:23px"><span style="position:absolute;right:2.5px;bottom:5.5px;">0.0%</span></div>
<div class="abs cell " style="left:1617px;top:913px;width:84px;height:23px"><span style="position:absolute;right:6px;bottom:5.5px;">$3,000</span></div>
<div class="abs cell " style="left:1701px;top:913px;width:73px;height:23px"><span style="position:absolute;right:6px;bottom:5.5px;">$0</span></div>
<div class="abs cell " style="left:1774px;top:913px;width:72.5px;height:23px"><span style="position:absolute;right:2.5px;bottom:5.5px;">0.0%</span></div>
<svg class="abs" style="left:167px;top:914px" width="6" height="6"><path d="M0 0H5L0 5Z" fill="#1e7a3a"/></svg>
<svg class="abs" style="left:223px;top:914px" width="6" height="6"><path d="M0 0H5L0 5Z" fill="#1e7a3a"/></svg>
<div class="abs cell " style="left:56px;top:936px;width:110px;height:23px;overflow:visible"><span style="position:absolute;left:2.5px;bottom:5.5px;white-space:nowrap;">COMMUNITY SVCS</span></div>
<div class="abs cell " style="left:166px;top:936px;width:56px;height:23px"><span style="position:absolute;left:1.5px;right:0;text-align:center;bottom:5.5px;">16200</span></div>
<div class="abs cell " style="left:222px;top:936px;width:53px;height:23px"><span style="position:absolute;left:1.5px;right:0;text-align:center;bottom:5.5px;">5272</span></div>
<div class="abs cell " style="left:275px;top:936px;width:229px;height:23px;overflow:visible"><span style="position:absolute;left:3.3px;bottom:5.5px;white-space:nowrap;">TRAINING AND EDUCATION</span></div>
<div class="abs cell " style="left:504px;top:936px;width:205.5px;height:23px;overflow:visible"><span style="position:absolute;left:3.3px;bottom:5.5px;white-space:nowrap;">LIBRARY ADMIN/PGMS</span></div>
<div class="abs cell " style="left:709.5px;top:936px;width:80.0px;height:23px"><span style="position:absolute;right:6px;bottom:5.5px;">$49</span></div>
<div class="abs cell " style="left:789.5px;top:936px;width:80.0px;height:23px"><span style="position:absolute;right:6px;bottom:5.5px;">$0</span></div>
<div class="abs cell " style="left:869.5px;top:936px;width:84.0px;height:23px"><span style="position:absolute;right:6px;bottom:5.5px;">$0</span></div>
<div class="abs cell " style="left:953.5px;top:936px;width:80.5px;height:23px"><span style="position:absolute;right:6px;bottom:5.5px;">$0</span></div>
<div class="abs cell " style="left:1034px;top:936px;width:81.5px;height:23px"><span style="position:absolute;right:6px;bottom:5.5px;">$0</span></div>
<div class="abs cell " style="left:1115.5px;top:936px;width:81.5px;height:23px"><span style="position:absolute;right:6px;bottom:5.5px;">$0</span></div>
<div class="abs cell " style="left:1197px;top:936px;width:69px;height:23px"><span style="position:absolute;right:6px;bottom:5.5px;">$0</span></div>
<div class="abs cell " style="left:1266px;top:936px;width:81.5px;height:23px"><span style="position:absolute;right:6px;bottom:5.5px;">$0</span></div>
<div class="abs cell " style="left:1347.5px;top:936px;width:81.5px;height:23px"><span style="position:absolute;right:6px;bottom:5.5px;">$0</span></div>
<div class="abs cell " style="left:1429px;top:936px;width:72px;height:23px"><span style="position:absolute;right:6px;bottom:5.5px;">$0</span></div>
<div class="abs cell " style="left:1501px;top:936px;width:73px;height:23px"><span style="position:absolute;right:2.5px;bottom:5.5px;">0</span></div>
<div class="abs cell " style="left:1617px;top:936px;width:84px;height:23px"><span style="position:absolute;right:6px;bottom:5.5px;">$0</span></div>
<div class="abs cell " style="left:1701px;top:936px;width:73px;height:23px"><span style="position:absolute;right:6px;bottom:5.5px;">$0</span></div>
<div class="abs cell " style="left:1774px;top:936px;width:72.5px;height:23px"><span style="position:absolute;right:2.5px;bottom:5.5px;">0</span></div>
<svg class="abs" style="left:167px;top:937px" width="6" height="6"><path d="M0 0H5L0 5Z" fill="#1e7a3a"/></svg>
<svg class="abs" style="left:223px;top:937px" width="6" height="6"><path d="M0 0H5L0 5Z" fill="#1e7a3a"/></svg>
<div class="abs" style="left:0;top:952.5px;width:1920px;height:25px;background:#f3f3f3"></div>
<div class="abs" style="left:0;top:976.5px;width:1920px;height:1px;background:#dcdcdc"></div>
<svg class="abs" style="left:5px;top:960px" width="40" height="12"><path d="M6 2L2 6L6 10" stroke="#aaa" fill="none"/><path d="M30 2L34 6L30 10" stroke="#aaa" fill="none"/></svg>
<div class="abs" style="left:72px;top:953px;width:80px;height:22px;background:#fff"></div>
<div class="abs tab" style="left:77px;top:958.5px;font-size:10.2px;color:#222;-webkit-text-stroke:0.25px #222">Comm Services</div>
<div class="abs" style="left:77px;top:971px;width:72px;height:2px;background:#1e6e47;border-radius:1px"></div>
<svg class="abs" style="left:189px;top:959px" width="12" height="12"><path d="M6 1V11M1 6H11" stroke="#666" stroke-width="1.1"/></svg>
<div class="abs" style="left:1043px;top:961px;width:1.5px;height:1.5px;background:#555"></div><div class="abs" style="left:1043px;top:964.5px;width:1.5px;height:1.5px;background:#555"></div><div class="abs" style="left:1043px;top:968px;width:1.5px;height:1.5px;background:#555"></div>
<svg class="abs" style="left:1058px;top:960px" width="8" height="10"><path d="M7 1L2 5L7 9Z" fill="#555"/></svg>
<div class="abs" style="left:1069px;top:962.5px;width:801px;height:5.5px;background:#6e6e6e;border-radius:3px"></div>
<svg class="abs" style="left:1894px;top:960px" width="8" height="10"><path d="M1 1L6 5L1 9Z" fill="#555"/></svg>
<div class="abs" style="left:1904px;top:247px;width:16px;height:706px;background:#f5f5f5"></div><div class="abs" style="left:1919px;top:121px;width:1px;height:873px;background:#d0d0d0"></div>
<svg class="abs" style="left:1906.5px;top:249px" width="10" height="8"><path d="M1 7L5 2L9 7Z" fill="#555"/></svg>
<svg class="abs" style="left:1906.5px;top:943px" width="10" height="8"><path d="M1 1L5 6L9 1Z" fill="#555"/></svg>
<div class="abs" style="left:1908px;top:526px;width:6px;height:37px;background:#6e6e6e;border-radius:3px"></div>
<div class="abs" style="left:0;top:977.5px;width:1920px;height:16.5px;background:#f3f3f3"></div>
<div class="abs rt" style="left:0px;top:981px;font-size:8.5px;color:#444">eady</div>
<svg class="abs" style="left:32px;top:980px" width="12" height="12"><circle cx="6" cy="2.5" r="2" fill="none" stroke="#555"/><path d="M1 5H11M6 5V8L3 11M6 8L9 11" stroke="#555" fill="none"/></svg>
<div class="abs rt" style="left:46px;top:981px;font-size:7.9px;font-weight:bold;color:#333">Accessibility: Investigate</div>
<div class="abs" style="left:1688px;top:978px;width:26px;height:15px;background:#e3e3e3"></div>
<svg class="abs" style="left:1695px;top:980px" width="12" height="11"><rect x="0.5" y="0.5" width="11" height="10" fill="none" stroke="#444"/><path d="M0 4H12M0 7.5H12M4 0V11M8 0V11" stroke="#444" stroke-width="0.8"/></svg>
<svg class="abs" style="left:1726px;top:980px" width="12" height="11"><rect x="0.5" y="0.5" width="11" height="10" fill="none" stroke="#555"/><rect x="3" y="3" width="6" height="5" fill="none" stroke="#555"/></svg>
<svg class="abs" style="left:1756px;top:980px" width="12" height="11"><rect x="0.5" y="0.5" width="11" height="10" fill="none" stroke="#555"/><path d="M4 0V8H8V0" stroke="#555" fill="none"/></svg>
<div class="abs" style="left:1782px;top:985px;width:5px;height:1px;background:#777"></div>
<div class="abs" style="left:1791px;top:985.5px;width:74px;height:1px;background:#888"></div>
<div class="abs" style="left:1829px;top:981px;width:3px;height:9px;background:#555"></div>
<div class="abs" style="left:1868px;top:985px;width:6px;height:1px;background:#777"></div><div class="abs" style="left:1870.5px;top:982.5px;width:1px;height:6px;background:#777"></div>
<div class="abs rt" style="left:1884px;top:982px;font-size:7px;color:#555">115%</div>
<div class="abs" style="left:0;top:994px;width:1920px;height:86px;background:#000"></div></body></html>
